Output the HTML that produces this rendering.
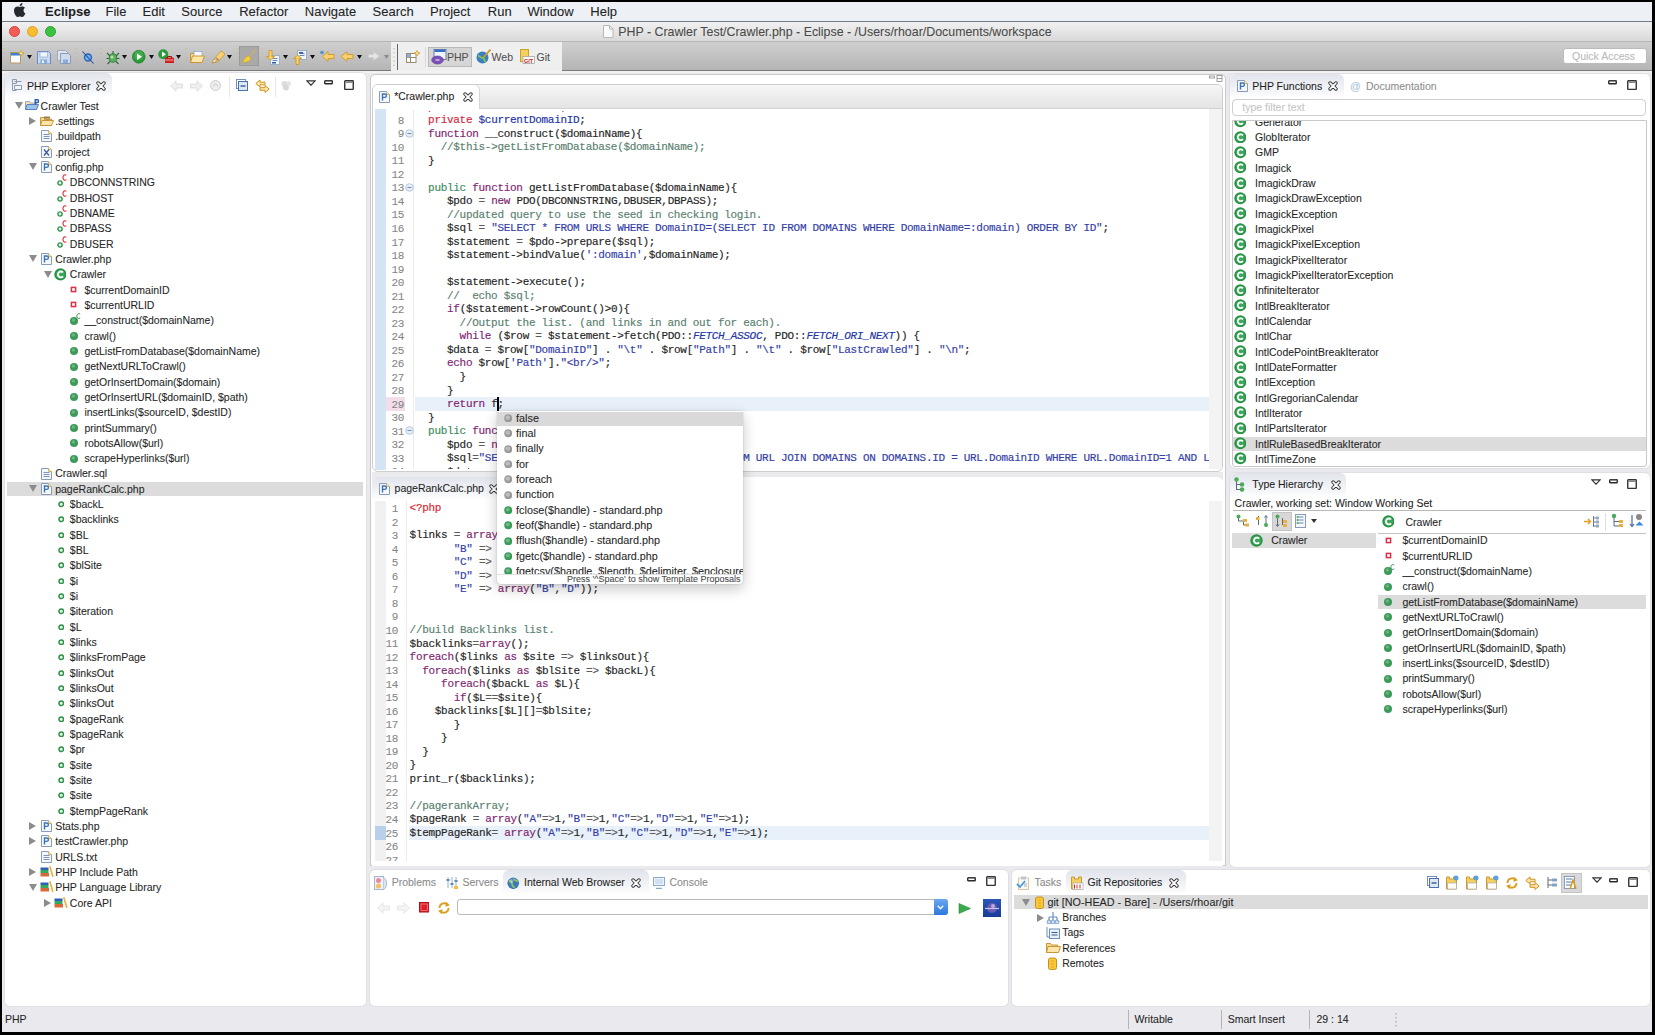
<!DOCTYPE html><html><head><meta charset="utf-8"><style>
html,body{margin:0;padding:0}
body{width:1655px;height:1035px;overflow:hidden;background:#000;position:relative}
div,span,svg{position:absolute;box-sizing:border-box}
.t{white-space:pre;line-height:1}
.t span{position:static}
.t{-webkit-text-stroke:0.08px currentColor}
.c,.c span{-webkit-text-stroke:0.16px currentColor}
</style></head><body>
<div style="left:2px;top:2px;width:1650px;height:19px;background:#edf1f6"></div>
<div style="left:2px;top:21px;width:1650px;height:1px;background:#6f7c88"></div>
<div style="left:2px;top:22px;width:1650px;height:1010px;background:#eaeaee"></div>
<div style="left:2px;top:22px;width:1650px;height:19px;background:linear-gradient(#f1f1f1,#d9d9d9);border-radius:4px 4px 0 0"></div>
<div style="left:2px;top:41px;width:1650px;height:1px;background:#b4b8b8"></div>
<div style="left:2px;top:42px;width:1650px;height:28px;background:linear-gradient(#cfcfcf,#b5b5b5)"></div>
<div style="left:2px;top:70px;width:1650px;height:1px;background:#7a7a7a"></div>
<div style="left:391px;top:42px;width:171px;height:29px;background:#efefef"></div>
<div style="left:2px;top:71px;width:1650px;height:2px;background:#f2f2f2"></div>
<svg style="position:absolute;left:13.5px;top:3px" width="13" height="14" viewBox="0 0 13 14"><g transform="translate(-1.3 0) scale(0.5833)"><path d="M12.152 6.896c-.948 0-2.415-1.078-3.96-1.04-2.04.027-3.91 1.183-4.961 3.014-2.117 3.675-.546 9.103 1.519 12.09 1.013 1.454 2.208 3.09 3.792 3.039 1.52-.065 2.090-.987 3.935-.987 1.831 0 2.350.987 3.960.948 1.637-.026 2.676-1.480 3.676-2.948 1.156-1.688 1.636-3.325 1.662-3.415-.039-.013-3.182-1.221-3.220-4.857-.026-3.040 2.480-4.494 2.597-4.559-1.429-2.090-3.623-2.324-4.390-2.376-2-.156-3.675 1.090-4.610 1.090zM15.530 3.830c.843-1.012 1.400-2.427 1.245-3.830-1.207.052-2.662.805-3.532 1.818-.780.896-1.454 2.338-1.273 3.714 1.338.104 2.715-.688 3.559-1.701" fill="#262a30"/></g></svg>
<span class="t" style="left:45px;top:4.75px;font-size:13px;font-family:'Liberation Sans',sans-serif;color:#1e1e1e;font-weight:bold">Eclipse</span>
<span class="t" style="left:105.5px;top:4.75px;font-size:13px;font-family:'Liberation Sans',sans-serif;color:#242424;">File</span>
<span class="t" style="left:142.5px;top:4.75px;font-size:13px;font-family:'Liberation Sans',sans-serif;color:#242424;">Edit</span>
<span class="t" style="left:181.3px;top:4.75px;font-size:13px;font-family:'Liberation Sans',sans-serif;color:#242424;">Source</span>
<span class="t" style="left:239.2px;top:4.75px;font-size:13px;font-family:'Liberation Sans',sans-serif;color:#242424;">Refactor</span>
<span class="t" style="left:304.8px;top:4.75px;font-size:13px;font-family:'Liberation Sans',sans-serif;color:#242424;">Navigate</span>
<span class="t" style="left:372.6px;top:4.75px;font-size:13px;font-family:'Liberation Sans',sans-serif;color:#242424;">Search</span>
<span class="t" style="left:430px;top:4.75px;font-size:13px;font-family:'Liberation Sans',sans-serif;color:#242424;">Project</span>
<span class="t" style="left:487.8px;top:4.75px;font-size:13px;font-family:'Liberation Sans',sans-serif;color:#242424;">Run</span>
<span class="t" style="left:527.4px;top:4.75px;font-size:13px;font-family:'Liberation Sans',sans-serif;color:#242424;">Window</span>
<span class="t" style="left:590.3px;top:4.75px;font-size:13px;font-family:'Liberation Sans',sans-serif;color:#242424;">Help</span>
<div style="left:8.9px;top:25.9px;width:11.2px;height:11.2px;border-radius:50%;background:#f25c54;border:0.5px solid #dd463f"></div>
<div style="left:26.9px;top:25.9px;width:11.2px;height:11.2px;border-radius:50%;background:#f7bd2f;border:0.5px solid #dea126"></div>
<div style="left:44.9px;top:25.9px;width:11.2px;height:11.2px;border-radius:50%;background:#3cc23e;border:0.5px solid #2ea432"></div>
<svg style="position:absolute;left:602px;top:25px" width="12" height="13" viewBox="0 0 12 13"><path d="M1.5 .5h6l3.5 3.5v8.5h-9.5z" fill="#fafafa" stroke="#b8b8b8"/><path d="M7.5 .5v3.5h3.5" fill="none" stroke="#b8b8b8"/></svg>
<span class="t" style="left:618.2px;top:26.36px;font-size:12.4px;font-family:'Liberation Sans',sans-serif;color:#4a4a4a;">PHP - Crawler Test/Crawler.php - Eclipse - /Users/rhoar/Documents/workspace</span>
<div style="left:1563px;top:48px;width:84px;height:16px;background:#fff;border:1px solid #bcbcbc;border-radius:3px"></div>
<span class="t" style="left:1572px;top:51.08px;font-size:10.5px;font-family:'Liberation Sans',sans-serif;color:#b9b9b9;">Quick Access</span>
<div style="left:5px;top:72.5px;width:361px;height:933.5px;background:#fff;border-radius:5px;box-shadow:0 0 0 1px #e0e0e4"></div>
<div style="left:5px;top:72.5px;width:107px;height:24px;background:linear-gradient(#e1e4ec,#f7f8fa 80%,#fff);border-radius:6px 6px 0 0"></div>
<div style="left:369.5px;top:74px;width:856px;height:792px;background:#fff;border:1px solid #c9c9c9;border-radius:5px 5px 0 0"></div>
<div style="left:1230px;top:73.5px;width:420px;height:394.5px;background:#fff;border-radius:5px;box-shadow:0 0 0 1px #e0e0e4"></div>
<div style="left:1230px;top:73.5px;width:113.5px;height:24px;background:linear-gradient(#e1e4ec,#f7f8fa 80%,#fff);border-radius:6px 6px 0 0"></div>
<div style="left:1230px;top:472.5px;width:420px;height:394px;background:#fff;border-radius:5px;box-shadow:0 0 0 1px #e0e0e4"></div>
<div style="left:1230px;top:472.5px;width:116px;height:24px;background:linear-gradient(#e1e4ec,#f7f8fa 80%,#fff);border-radius:6px 6px 0 0"></div>
<div style="left:370px;top:870px;width:637.5px;height:136px;background:#fff;border-radius:5px;box-shadow:0 0 0 1px #e0e0e4"></div>
<div style="left:1012px;top:870px;width:638px;height:136px;background:#fff;border-radius:5px;box-shadow:0 0 0 1px #e0e0e4"></div>
<svg style="position:absolute;left:12px;top:79px" width="10" height="13" viewBox="0 0 10 13"><path d="M.5 .5h4v4h-4zM.5 4.5v7h4M2.5 6.5h7v4h-7zM2.5 2.5h7" fill="none" stroke="#8a9ab0" stroke-width="1"/></svg>
<span class="t" style="left:27px;top:80.88px;font-size:10.5px;font-family:'Liberation Sans',sans-serif;color:#222;">PHP Explorer</span>
<svg style="position:absolute;left:96px;top:80.5px" width="10" height="10" viewBox="0 0 10 10"><path d="M2.1 2.1L7.9 7.9M7.9 2.1L2.1 7.9" stroke="#333" stroke-width="3.5" stroke-linecap="round"/><path d="M2.1 2.1L7.9 7.9M7.9 2.1L2.1 7.9" stroke="#fff" stroke-width="1.7" stroke-linecap="round"/></svg>
<svg style="position:absolute;left:170px;top:80px" width="13" height="12" viewBox="0 0 13 12"><path d="M.5 6L6 .8V4h6.5v4H6v3.2z" fill="#ececec" stroke="#d0d0d0" stroke-width=".8" opacity=".8"/></svg>
<svg style="position:absolute;left:190px;top:80px" width="13" height="12" viewBox="0 0 13 12"><path d="M12.5 6L7 .8V4H.5v4H7v3.2z" fill="#ececec" stroke="#d0d0d0" stroke-width=".8" opacity=".8"/></svg>
<svg style="position:absolute;left:209px;top:79px" width="13" height="13" viewBox="0 0 13 13"><circle cx="6.5" cy="6.5" r="5" fill="#eee" stroke="#d0d0d0"/><path d="M4 7.5l2.5-3 2.5 3" fill="none" stroke="#c8c8c8"/></svg>
<div style="left:229px;top:77px;width:1px;height:20px;background:#e6e6e6"></div>
<svg style="position:absolute;left:236px;top:79px" width="12" height="12" viewBox="0 0 12 12"><rect x=".5" y=".5" width="9" height="9" fill="#fff" stroke="#7890b8"/><rect x="2.5" y="2.5" width="9" height="9" fill="#dde8f5" stroke="#4a70b0"/><path d="M4.5 7h5" stroke="#2a4f90" stroke-width="1.3"/></svg>
<svg style="position:absolute;left:254.5px;top:78.5px" width="15" height="14" viewBox="0 0 15 14"><path d="M.8 4.5L5 1v2.2h5v2.6H5V8z" fill="#fde9a8" stroke="#d09020" stroke-width="1"/><path d="M14.2 10L10 6.5v2.2H5v2.6h5v2.2z" fill="#fde9a8" stroke="#d09020" stroke-width="1"/></svg>
<div style="left:275px;top:77px;width:1px;height:20px;background:#e6e6e6"></div>
<svg style="position:absolute;left:281px;top:80px" width="11" height="11" viewBox="0 0 11 11"><circle cx="3.5" cy="4" r="3" fill="#ddd"/><circle cx="7.5" cy="3.5" r="2.5" fill="#e4e4e4"/><circle cx="5" cy="7.5" r="3" fill="#d8d8d8"/></svg>
<svg style="position:absolute;left:306.3px;top:80px" width="10" height="6" viewBox="0 0 10 6"><path d="M.8 .8H9.2L5 5.2z" fill="#fff" stroke="#333" stroke-width="1.2"/></svg>
<svg style="position:absolute;left:324px;top:80px" width="9" height="5" viewBox="0 0 9 5"><rect x=".75" y=".75" width="7.5" height="3" rx=".5" fill="#fff" stroke="#2a2a2a" stroke-width="1.4"/><path d="M1.4 1.2h6.2" stroke="#888" stroke-width=".8"/></svg>
<svg style="position:absolute;left:343.5px;top:79.5px" width="10" height="10.5" viewBox="0 0 10 10.5"><rect x=".75" y=".75" width="8.5" height="8.7" rx=".6" fill="#fff" stroke="#333" stroke-width="1.4"/><rect x="1.4" y="1.4" width="7.2" height="1.6" fill="#8a8a8a"/></svg>
<svg style="position:absolute;left:14.5px;top:102.1px" width="8" height="7" viewBox="0 0 8 7"><path d="M0 0H8L4 7z" fill="#8c8c8c"/></svg>
<svg style="position:absolute;left:25.0px;top:99.1px" width="14" height="11" viewBox="0 0 14 11"><path d="M.5 2.5h4l1 1.5h6v6.5H.5z" fill="#f9e3a6" stroke="#9aa8c8"/><path d="M2 5.5h11.5l-2 5H.5z" fill="#9cc3ea" stroke="#5a7fc0"/><path d="M10.2 5.5V.7h2a1.4 1.4 0 010 2.8h-2" fill="none" stroke="#2a5fb0" stroke-width="1.4"/></svg>
<span class="t" style="left:40.6px;top:100.67px;font-size:10.5px;font-family:'Liberation Sans',sans-serif;color:#262626;">Crawler Test</span>
<svg style="position:absolute;left:29.400000000000002px;top:116.925px" width="7" height="8" viewBox="0 0 7 8"><path d="M0 0L7 4L0 8z" fill="#8c8c8c"/></svg>
<svg style="position:absolute;left:40.1px;top:114.925px" width="14" height="11" viewBox="0 0 14 11"><path d="M.5 2.5h4l1 1.5h6v6.5H.5z" fill="#f6d88a" stroke="#c8963a"/><path d="M2 5.5h11.5l-2 5H.5z" fill="#fde6a8" stroke="#c8963a"/><path d="M5 1v4M7 1v4M9 1v4M4 2.5h6" stroke="#8a6a30" stroke-width=".8"/></svg>
<span class="t" style="left:55.2px;top:116.00px;font-size:10.5px;font-family:'Liberation Sans',sans-serif;color:#262626;">.settings</span>
<svg style="position:absolute;left:41.1px;top:130.35px" width="11" height="12" viewBox="0 0 11 12"><path d="M.5 .5H7.5L10.5 3.5V11.5H.5z" fill="#f4f7fb" stroke="#8a9bb5"/><path d="M7.5 .5V3.5H10.5" fill="#fff4d0" stroke="#d9b45a"/><path d="M2.5 4.5h6M2.5 6.5h6M2.5 8.5h6" stroke="#7d93c0" stroke-width="1"/></svg>
<span class="t" style="left:55.2px;top:131.32px;font-size:10.5px;font-family:'Liberation Sans',sans-serif;color:#262626;">.buildpath</span>
<svg style="position:absolute;left:41.1px;top:145.67499999999998px" width="11" height="12" viewBox="0 0 11 12"><path d="M.5 .5H7.5L10.5 3.5V11.5H.5z" fill="#f4f7fb" stroke="#8a9bb5"/><path d="M7.5 .5V3.5H10.5" fill="#fff4d0" stroke="#d9b45a"/><path d="M3 3.5L8 9.5M8 3.5L3 9.5" stroke="#3a5a9a" stroke-width="1.3"/></svg>
<span class="t" style="left:55.2px;top:146.65px;font-size:10.5px;font-family:'Liberation Sans',sans-serif;color:#262626;">.project</span>
<svg style="position:absolute;left:29.1px;top:163.39999999999998px" width="8" height="7" viewBox="0 0 8 7"><path d="M0 0H8L4 7z" fill="#8c8c8c"/></svg>
<svg style="position:absolute;left:41.1px;top:160.99999999999997px" width="11" height="12" viewBox="0 0 11 12"><path d="M.5 .5H7.5L10.5 3.5V11.5H.5z" fill="#f4f7fb" stroke="#8a9bb5"/><path d="M7.5 .5V3.5H10.5" fill="#fff4d0" stroke="#d9b45a"/><path d="M3.5 9.5V3h2.2a1.7 1.7 0 010 3.4H3.5" fill="none" stroke="#3a72b8" stroke-width="1.4"/></svg>
<span class="t" style="left:55.2px;top:161.97px;font-size:10.5px;font-family:'Liberation Sans',sans-serif;color:#262626;">config.php</span>
<svg style="position:absolute;left:57.2px;top:180.225px" width="6" height="6" viewBox="0 0 6 6"><circle cx="3" cy="3" r="2.1" fill="#e8f5ea" stroke="#2f9248" stroke-width="1.4"/></svg>
<svg style="position:absolute;left:62.2px;top:174.225px" width="5" height="7" viewBox="0 0 5 7"><path d="M4.3 1.3A2 2.8 0 1 0 4.3 5.7" fill="none" stroke="#e0303a" stroke-width="1.1"/></svg>
<span class="t" style="left:69.8px;top:177.30px;font-size:10.5px;font-family:'Liberation Sans',sans-serif;color:#262626;">DBCONNSTRING</span>
<svg style="position:absolute;left:57.2px;top:195.54999999999998px" width="6" height="6" viewBox="0 0 6 6"><circle cx="3" cy="3" r="2.1" fill="#e8f5ea" stroke="#2f9248" stroke-width="1.4"/></svg>
<svg style="position:absolute;left:62.2px;top:189.54999999999998px" width="5" height="7" viewBox="0 0 5 7"><path d="M4.3 1.3A2 2.8 0 1 0 4.3 5.7" fill="none" stroke="#e0303a" stroke-width="1.1"/></svg>
<span class="t" style="left:69.8px;top:192.62px;font-size:10.5px;font-family:'Liberation Sans',sans-serif;color:#262626;">DBHOST</span>
<svg style="position:absolute;left:57.2px;top:210.875px" width="6" height="6" viewBox="0 0 6 6"><circle cx="3" cy="3" r="2.1" fill="#e8f5ea" stroke="#2f9248" stroke-width="1.4"/></svg>
<svg style="position:absolute;left:62.2px;top:204.875px" width="5" height="7" viewBox="0 0 5 7"><path d="M4.3 1.3A2 2.8 0 1 0 4.3 5.7" fill="none" stroke="#e0303a" stroke-width="1.1"/></svg>
<span class="t" style="left:69.8px;top:207.95px;font-size:10.5px;font-family:'Liberation Sans',sans-serif;color:#262626;">DBNAME</span>
<svg style="position:absolute;left:57.2px;top:226.2px" width="6" height="6" viewBox="0 0 6 6"><circle cx="3" cy="3" r="2.1" fill="#e8f5ea" stroke="#2f9248" stroke-width="1.4"/></svg>
<svg style="position:absolute;left:62.2px;top:220.2px" width="5" height="7" viewBox="0 0 5 7"><path d="M4.3 1.3A2 2.8 0 1 0 4.3 5.7" fill="none" stroke="#e0303a" stroke-width="1.1"/></svg>
<span class="t" style="left:69.8px;top:223.27px;font-size:10.5px;font-family:'Liberation Sans',sans-serif;color:#262626;">DBPASS</span>
<svg style="position:absolute;left:57.2px;top:241.52499999999998px" width="6" height="6" viewBox="0 0 6 6"><circle cx="3" cy="3" r="2.1" fill="#e8f5ea" stroke="#2f9248" stroke-width="1.4"/></svg>
<svg style="position:absolute;left:62.2px;top:235.52499999999998px" width="5" height="7" viewBox="0 0 5 7"><path d="M4.3 1.3A2 2.8 0 1 0 4.3 5.7" fill="none" stroke="#e0303a" stroke-width="1.1"/></svg>
<span class="t" style="left:69.8px;top:238.60px;font-size:10.5px;font-family:'Liberation Sans',sans-serif;color:#262626;">DBUSER</span>
<svg style="position:absolute;left:29.1px;top:255.35000000000002px" width="8" height="7" viewBox="0 0 8 7"><path d="M0 0H8L4 7z" fill="#8c8c8c"/></svg>
<svg style="position:absolute;left:41.1px;top:252.95000000000002px" width="11" height="12" viewBox="0 0 11 12"><path d="M.5 .5H7.5L10.5 3.5V11.5H.5z" fill="#f4f7fb" stroke="#8a9bb5"/><path d="M7.5 .5V3.5H10.5" fill="#fff4d0" stroke="#d9b45a"/><path d="M3.5 9.5V3h2.2a1.7 1.7 0 010 3.4H3.5" fill="none" stroke="#3a72b8" stroke-width="1.4"/></svg>
<span class="t" style="left:55.2px;top:253.93px;font-size:10.5px;font-family:'Liberation Sans',sans-serif;color:#262626;">Crawler.php</span>
<svg style="position:absolute;left:43.7px;top:270.67499999999995px" width="8" height="7" viewBox="0 0 8 7"><path d="M0 0H8L4 7z" fill="#8c8c8c"/></svg>
<svg style="position:absolute;left:53.7px;top:268.275px" width="12.8" height="12.8" viewBox="0 0 12.8 12.8"><circle cx="6.4" cy="6.4" r="6.1000000000000005" fill="#2f9a4a"/><circle cx="6.4" cy="6.4" r="5.1000000000000005" fill="#3aa85a" stroke="#1f7a35" stroke-width=".5"/><path d="M9.0 4.5A2.9 2.9 0 1 0 9.0 8.3" fill="none" stroke="#fff" stroke-width="1.8"/></svg>
<span class="t" style="left:69.8px;top:269.25px;font-size:10.5px;font-family:'Liberation Sans',sans-serif;color:#262626;">Crawler</span>
<svg style="position:absolute;left:69.8px;top:286.0px" width="7" height="7" viewBox="0 0 7 7"><rect x="1.4" y="1.4" width="4.2" height="4.2" fill="#fff" stroke="#dc3048" stroke-width="1.5"/></svg>
<span class="t" style="left:84.4px;top:284.57px;font-size:10.5px;font-family:'Liberation Sans',sans-serif;color:#262626;">$currentDomainID</span>
<svg style="position:absolute;left:69.8px;top:301.325px" width="7" height="7" viewBox="0 0 7 7"><rect x="1.4" y="1.4" width="4.2" height="4.2" fill="#fff" stroke="#dc3048" stroke-width="1.5"/></svg>
<span class="t" style="left:84.4px;top:299.90px;font-size:10.5px;font-family:'Liberation Sans',sans-serif;color:#262626;">$currentURLID</span>
<svg style="position:absolute;left:69.8px;top:316.65px" width="8" height="8" viewBox="0 0 8 8"><circle cx="4.0" cy="4.0" r="4.0" fill="#3c9a58"/><circle cx="3.4" cy="3.0" r="1.8" fill="#7cc08e" opacity=".7"/></svg>
<svg style="position:absolute;left:75.8px;top:313.15px" width="5" height="6" viewBox="0 0 5 6"><path d="M4.2 1.2A2 2.5 0 1 0 4.2 4.8" fill="none" stroke="#3c9a58" stroke-width="1"/></svg>
<span class="t" style="left:84.4px;top:315.22px;font-size:10.5px;font-family:'Liberation Sans',sans-serif;color:#262626;">__construct($domainName)</span>
<svg style="position:absolute;left:69.8px;top:331.975px" width="8" height="8" viewBox="0 0 8 8"><circle cx="4.0" cy="4.0" r="4.0" fill="#3c9a58"/><circle cx="3.4" cy="3.0" r="1.8" fill="#7cc08e" opacity=".7"/></svg>
<span class="t" style="left:84.4px;top:330.55px;font-size:10.5px;font-family:'Liberation Sans',sans-serif;color:#262626;">crawl()</span>
<svg style="position:absolute;left:69.8px;top:347.29999999999995px" width="8" height="8" viewBox="0 0 8 8"><circle cx="4.0" cy="4.0" r="4.0" fill="#3c9a58"/><circle cx="3.4" cy="3.0" r="1.8" fill="#7cc08e" opacity=".7"/></svg>
<span class="t" style="left:84.4px;top:345.87px;font-size:10.5px;font-family:'Liberation Sans',sans-serif;color:#262626;">getListFromDatabase($domainName)</span>
<svg style="position:absolute;left:69.8px;top:362.625px" width="8" height="8" viewBox="0 0 8 8"><circle cx="4.0" cy="4.0" r="4.0" fill="#3c9a58"/><circle cx="3.4" cy="3.0" r="1.8" fill="#7cc08e" opacity=".7"/></svg>
<span class="t" style="left:84.4px;top:361.20px;font-size:10.5px;font-family:'Liberation Sans',sans-serif;color:#262626;">getNextURLToCrawl()</span>
<svg style="position:absolute;left:69.8px;top:377.94999999999993px" width="8" height="8" viewBox="0 0 8 8"><circle cx="4.0" cy="4.0" r="4.0" fill="#3c9a58"/><circle cx="3.4" cy="3.0" r="1.8" fill="#7cc08e" opacity=".7"/></svg>
<span class="t" style="left:84.4px;top:376.52px;font-size:10.5px;font-family:'Liberation Sans',sans-serif;color:#262626;">getOrInsertDomain($domain)</span>
<svg style="position:absolute;left:69.8px;top:393.275px" width="8" height="8" viewBox="0 0 8 8"><circle cx="4.0" cy="4.0" r="4.0" fill="#3c9a58"/><circle cx="3.4" cy="3.0" r="1.8" fill="#7cc08e" opacity=".7"/></svg>
<span class="t" style="left:84.4px;top:391.85px;font-size:10.5px;font-family:'Liberation Sans',sans-serif;color:#262626;">getOrInsertURL($domainID, $path)</span>
<svg style="position:absolute;left:69.8px;top:408.6px" width="8" height="8" viewBox="0 0 8 8"><circle cx="4.0" cy="4.0" r="4.0" fill="#3c9a58"/><circle cx="3.4" cy="3.0" r="1.8" fill="#7cc08e" opacity=".7"/></svg>
<span class="t" style="left:84.4px;top:407.18px;font-size:10.5px;font-family:'Liberation Sans',sans-serif;color:#262626;">insertLinks($sourceID, $destID)</span>
<svg style="position:absolute;left:69.8px;top:423.92499999999995px" width="8" height="8" viewBox="0 0 8 8"><circle cx="4.0" cy="4.0" r="4.0" fill="#3c9a58"/><circle cx="3.4" cy="3.0" r="1.8" fill="#7cc08e" opacity=".7"/></svg>
<span class="t" style="left:84.4px;top:422.50px;font-size:10.5px;font-family:'Liberation Sans',sans-serif;color:#262626;">printSummary()</span>
<svg style="position:absolute;left:69.8px;top:439.25px" width="8" height="8" viewBox="0 0 8 8"><circle cx="4.0" cy="4.0" r="4.0" fill="#3c9a58"/><circle cx="3.4" cy="3.0" r="1.8" fill="#7cc08e" opacity=".7"/></svg>
<span class="t" style="left:84.4px;top:437.82px;font-size:10.5px;font-family:'Liberation Sans',sans-serif;color:#262626;">robotsAllow($url)</span>
<svg style="position:absolute;left:69.8px;top:454.57499999999993px" width="8" height="8" viewBox="0 0 8 8"><circle cx="4.0" cy="4.0" r="4.0" fill="#3c9a58"/><circle cx="3.4" cy="3.0" r="1.8" fill="#7cc08e" opacity=".7"/></svg>
<span class="t" style="left:84.4px;top:453.15px;font-size:10.5px;font-family:'Liberation Sans',sans-serif;color:#262626;">scrapeHyperlinks($url)</span>
<svg style="position:absolute;left:41.1px;top:467.5px" width="11" height="12" viewBox="0 0 11 12"><path d="M.5 .5H7.5L10.5 3.5V11.5H.5z" fill="#f4f7fb" stroke="#8a9bb5"/><path d="M7.5 .5V3.5H10.5" fill="#fff4d0" stroke="#d9b45a"/><path d="M2.5 4.5h6M2.5 6.5h6M2.5 8.5h6" stroke="#7d93c0" stroke-width="1"/></svg>
<span class="t" style="left:55.2px;top:468.47px;font-size:10.5px;font-family:'Liberation Sans',sans-serif;color:#262626;">Crawler.sql</span>
<div style="left:7px;top:482.02500000000003px;width:356px;height:14.3px;background:#dcdcdc"></div>
<svg style="position:absolute;left:29.1px;top:485.225px" width="8" height="7" viewBox="0 0 8 7"><path d="M0 0H8L4 7z" fill="#8c8c8c"/></svg>
<svg style="position:absolute;left:41.1px;top:482.82500000000005px" width="11" height="12" viewBox="0 0 11 12"><path d="M.5 .5H7.5L10.5 3.5V11.5H.5z" fill="#f4f7fb" stroke="#8a9bb5"/><path d="M7.5 .5V3.5H10.5" fill="#fff4d0" stroke="#d9b45a"/><path d="M3.5 9.5V3h2.2a1.7 1.7 0 010 3.4H3.5" fill="none" stroke="#3a72b8" stroke-width="1.4"/></svg>
<span class="t" style="left:55.2px;top:483.80px;font-size:10.5px;font-family:'Liberation Sans',sans-serif;color:#262626;">pageRankCalc.php</span>
<svg style="position:absolute;left:57.5px;top:501.04999999999995px" width="6.5" height="6.5" viewBox="0 0 6.5 6.5"><circle cx="3.25" cy="3.25" r="2.3" fill="#e8f5ea" stroke="#2f9248" stroke-width="1.5"/></svg>
<span class="t" style="left:69.8px;top:499.12px;font-size:10.5px;font-family:'Liberation Sans',sans-serif;color:#262626;">$backL</span>
<svg style="position:absolute;left:57.5px;top:516.375px" width="6.5" height="6.5" viewBox="0 0 6.5 6.5"><circle cx="3.25" cy="3.25" r="2.3" fill="#e8f5ea" stroke="#2f9248" stroke-width="1.5"/></svg>
<span class="t" style="left:69.8px;top:514.45px;font-size:10.5px;font-family:'Liberation Sans',sans-serif;color:#262626;">$backlinks</span>
<svg style="position:absolute;left:57.5px;top:531.6999999999999px" width="6.5" height="6.5" viewBox="0 0 6.5 6.5"><circle cx="3.25" cy="3.25" r="2.3" fill="#e8f5ea" stroke="#2f9248" stroke-width="1.5"/></svg>
<span class="t" style="left:69.8px;top:529.77px;font-size:10.5px;font-family:'Liberation Sans',sans-serif;color:#262626;">$BL</span>
<svg style="position:absolute;left:57.5px;top:547.025px" width="6.5" height="6.5" viewBox="0 0 6.5 6.5"><circle cx="3.25" cy="3.25" r="2.3" fill="#e8f5ea" stroke="#2f9248" stroke-width="1.5"/></svg>
<span class="t" style="left:69.8px;top:545.10px;font-size:10.5px;font-family:'Liberation Sans',sans-serif;color:#262626;">$BL</span>
<svg style="position:absolute;left:57.5px;top:562.35px" width="6.5" height="6.5" viewBox="0 0 6.5 6.5"><circle cx="3.25" cy="3.25" r="2.3" fill="#e8f5ea" stroke="#2f9248" stroke-width="1.5"/></svg>
<span class="t" style="left:69.8px;top:560.43px;font-size:10.5px;font-family:'Liberation Sans',sans-serif;color:#262626;">$blSite</span>
<svg style="position:absolute;left:57.5px;top:577.675px" width="6.5" height="6.5" viewBox="0 0 6.5 6.5"><circle cx="3.25" cy="3.25" r="2.3" fill="#e8f5ea" stroke="#2f9248" stroke-width="1.5"/></svg>
<span class="t" style="left:69.8px;top:575.75px;font-size:10.5px;font-family:'Liberation Sans',sans-serif;color:#262626;">$i</span>
<svg style="position:absolute;left:57.5px;top:593.0px" width="6.5" height="6.5" viewBox="0 0 6.5 6.5"><circle cx="3.25" cy="3.25" r="2.3" fill="#e8f5ea" stroke="#2f9248" stroke-width="1.5"/></svg>
<span class="t" style="left:69.8px;top:591.08px;font-size:10.5px;font-family:'Liberation Sans',sans-serif;color:#262626;">$i</span>
<svg style="position:absolute;left:57.5px;top:608.3249999999999px" width="6.5" height="6.5" viewBox="0 0 6.5 6.5"><circle cx="3.25" cy="3.25" r="2.3" fill="#e8f5ea" stroke="#2f9248" stroke-width="1.5"/></svg>
<span class="t" style="left:69.8px;top:606.40px;font-size:10.5px;font-family:'Liberation Sans',sans-serif;color:#262626;">$iteration</span>
<svg style="position:absolute;left:57.5px;top:623.65px" width="6.5" height="6.5" viewBox="0 0 6.5 6.5"><circle cx="3.25" cy="3.25" r="2.3" fill="#e8f5ea" stroke="#2f9248" stroke-width="1.5"/></svg>
<span class="t" style="left:69.8px;top:621.73px;font-size:10.5px;font-family:'Liberation Sans',sans-serif;color:#262626;">$L</span>
<svg style="position:absolute;left:57.5px;top:638.975px" width="6.5" height="6.5" viewBox="0 0 6.5 6.5"><circle cx="3.25" cy="3.25" r="2.3" fill="#e8f5ea" stroke="#2f9248" stroke-width="1.5"/></svg>
<span class="t" style="left:69.8px;top:637.05px;font-size:10.5px;font-family:'Liberation Sans',sans-serif;color:#262626;">$links</span>
<svg style="position:absolute;left:57.5px;top:654.3px" width="6.5" height="6.5" viewBox="0 0 6.5 6.5"><circle cx="3.25" cy="3.25" r="2.3" fill="#e8f5ea" stroke="#2f9248" stroke-width="1.5"/></svg>
<span class="t" style="left:69.8px;top:652.38px;font-size:10.5px;font-family:'Liberation Sans',sans-serif;color:#262626;">$linksFromPage</span>
<svg style="position:absolute;left:57.5px;top:669.625px" width="6.5" height="6.5" viewBox="0 0 6.5 6.5"><circle cx="3.25" cy="3.25" r="2.3" fill="#e8f5ea" stroke="#2f9248" stroke-width="1.5"/></svg>
<span class="t" style="left:69.8px;top:667.70px;font-size:10.5px;font-family:'Liberation Sans',sans-serif;color:#262626;">$linksOut</span>
<svg style="position:absolute;left:57.5px;top:684.95px" width="6.5" height="6.5" viewBox="0 0 6.5 6.5"><circle cx="3.25" cy="3.25" r="2.3" fill="#e8f5ea" stroke="#2f9248" stroke-width="1.5"/></svg>
<span class="t" style="left:69.8px;top:683.03px;font-size:10.5px;font-family:'Liberation Sans',sans-serif;color:#262626;">$linksOut</span>
<svg style="position:absolute;left:57.5px;top:700.275px" width="6.5" height="6.5" viewBox="0 0 6.5 6.5"><circle cx="3.25" cy="3.25" r="2.3" fill="#e8f5ea" stroke="#2f9248" stroke-width="1.5"/></svg>
<span class="t" style="left:69.8px;top:698.35px;font-size:10.5px;font-family:'Liberation Sans',sans-serif;color:#262626;">$linksOut</span>
<svg style="position:absolute;left:57.5px;top:715.6px" width="6.5" height="6.5" viewBox="0 0 6.5 6.5"><circle cx="3.25" cy="3.25" r="2.3" fill="#e8f5ea" stroke="#2f9248" stroke-width="1.5"/></svg>
<span class="t" style="left:69.8px;top:713.68px;font-size:10.5px;font-family:'Liberation Sans',sans-serif;color:#262626;">$pageRank</span>
<svg style="position:absolute;left:57.5px;top:730.925px" width="6.5" height="6.5" viewBox="0 0 6.5 6.5"><circle cx="3.25" cy="3.25" r="2.3" fill="#e8f5ea" stroke="#2f9248" stroke-width="1.5"/></svg>
<span class="t" style="left:69.8px;top:729.00px;font-size:10.5px;font-family:'Liberation Sans',sans-serif;color:#262626;">$pageRank</span>
<svg style="position:absolute;left:57.5px;top:746.25px" width="6.5" height="6.5" viewBox="0 0 6.5 6.5"><circle cx="3.25" cy="3.25" r="2.3" fill="#e8f5ea" stroke="#2f9248" stroke-width="1.5"/></svg>
<span class="t" style="left:69.8px;top:744.33px;font-size:10.5px;font-family:'Liberation Sans',sans-serif;color:#262626;">$pr</span>
<svg style="position:absolute;left:57.5px;top:761.575px" width="6.5" height="6.5" viewBox="0 0 6.5 6.5"><circle cx="3.25" cy="3.25" r="2.3" fill="#e8f5ea" stroke="#2f9248" stroke-width="1.5"/></svg>
<span class="t" style="left:69.8px;top:759.65px;font-size:10.5px;font-family:'Liberation Sans',sans-serif;color:#262626;">$site</span>
<svg style="position:absolute;left:57.5px;top:776.9px" width="6.5" height="6.5" viewBox="0 0 6.5 6.5"><circle cx="3.25" cy="3.25" r="2.3" fill="#e8f5ea" stroke="#2f9248" stroke-width="1.5"/></svg>
<span class="t" style="left:69.8px;top:774.98px;font-size:10.5px;font-family:'Liberation Sans',sans-serif;color:#262626;">$site</span>
<svg style="position:absolute;left:57.5px;top:792.225px" width="6.5" height="6.5" viewBox="0 0 6.5 6.5"><circle cx="3.25" cy="3.25" r="2.3" fill="#e8f5ea" stroke="#2f9248" stroke-width="1.5"/></svg>
<span class="t" style="left:69.8px;top:790.30px;font-size:10.5px;font-family:'Liberation Sans',sans-serif;color:#262626;">$site</span>
<svg style="position:absolute;left:57.5px;top:807.55px" width="6.5" height="6.5" viewBox="0 0 6.5 6.5"><circle cx="3.25" cy="3.25" r="2.3" fill="#e8f5ea" stroke="#2f9248" stroke-width="1.5"/></svg>
<span class="t" style="left:69.8px;top:805.62px;font-size:10.5px;font-family:'Liberation Sans',sans-serif;color:#262626;">$tempPageRank</span>
<svg style="position:absolute;left:29.400000000000002px;top:821.875px" width="7" height="8" viewBox="0 0 7 8"><path d="M0 0L7 4L0 8z" fill="#8c8c8c"/></svg>
<svg style="position:absolute;left:41.1px;top:819.975px" width="11" height="12" viewBox="0 0 11 12"><path d="M.5 .5H7.5L10.5 3.5V11.5H.5z" fill="#f4f7fb" stroke="#8a9bb5"/><path d="M7.5 .5V3.5H10.5" fill="#fff4d0" stroke="#d9b45a"/><path d="M3.5 9.5V3h2.2a1.7 1.7 0 010 3.4H3.5" fill="none" stroke="#3a72b8" stroke-width="1.4"/></svg>
<span class="t" style="left:55.2px;top:820.95px;font-size:10.5px;font-family:'Liberation Sans',sans-serif;color:#262626;">Stats.php</span>
<svg style="position:absolute;left:29.400000000000002px;top:837.1999999999999px" width="7" height="8" viewBox="0 0 7 8"><path d="M0 0L7 4L0 8z" fill="#8c8c8c"/></svg>
<svg style="position:absolute;left:41.1px;top:835.3px" width="11" height="12" viewBox="0 0 11 12"><path d="M.5 .5H7.5L10.5 3.5V11.5H.5z" fill="#f4f7fb" stroke="#8a9bb5"/><path d="M7.5 .5V3.5H10.5" fill="#fff4d0" stroke="#d9b45a"/><path d="M3.5 9.5V3h2.2a1.7 1.7 0 010 3.4H3.5" fill="none" stroke="#3a72b8" stroke-width="1.4"/></svg>
<span class="t" style="left:55.2px;top:836.27px;font-size:10.5px;font-family:'Liberation Sans',sans-serif;color:#262626;">testCrawler.php</span>
<svg style="position:absolute;left:41.1px;top:850.625px" width="11" height="12" viewBox="0 0 11 12"><path d="M.5 .5H7.5L10.5 3.5V11.5H.5z" fill="#f4f7fb" stroke="#8a9bb5"/><path d="M7.5 .5V3.5H10.5" fill="#fff4d0" stroke="#d9b45a"/><path d="M2.5 4.5h6M2.5 6.5h6M2.5 8.5h6" stroke="#7d93c0" stroke-width="1"/></svg>
<span class="t" style="left:55.2px;top:851.60px;font-size:10.5px;font-family:'Liberation Sans',sans-serif;color:#262626;">URLS.txt</span>
<svg style="position:absolute;left:29.400000000000002px;top:867.85px" width="7" height="8" viewBox="0 0 7 8"><path d="M0 0L7 4L0 8z" fill="#8c8c8c"/></svg>
<svg style="position:absolute;left:39.6px;top:865.85px" width="14" height="11" viewBox="0 0 14 11"><rect x=".5" y="1.5" width="8" height="2.5" fill="#2d5fb5"/><rect x=".5" y="4" width="8" height="3" fill="#35a860"/><rect x=".5" y="7" width="8.5" height="3.5" fill="#d86a3a"/><path d="M9 .5l1.5-.5 3.3 10.5-1.7.5z" fill="#f0b040"/></svg>
<span class="t" style="left:55.2px;top:866.93px;font-size:10.5px;font-family:'Liberation Sans',sans-serif;color:#262626;">PHP Include Path</span>
<svg style="position:absolute;left:29.1px;top:883.675px" width="8" height="7" viewBox="0 0 8 7"><path d="M0 0H8L4 7z" fill="#8c8c8c"/></svg>
<svg style="position:absolute;left:39.6px;top:881.175px" width="14" height="11" viewBox="0 0 14 11"><rect x=".5" y="1.5" width="8" height="2.5" fill="#2d5fb5"/><rect x=".5" y="4" width="8" height="3" fill="#35a860"/><rect x=".5" y="7" width="8.5" height="3.5" fill="#d86a3a"/><path d="M9 .5l1.5-.5 3.3 10.5-1.7.5z" fill="#f0b040"/></svg>
<span class="t" style="left:55.2px;top:882.25px;font-size:10.5px;font-family:'Liberation Sans',sans-serif;color:#262626;">PHP Language Library</span>
<svg style="position:absolute;left:44.0px;top:898.5px" width="7" height="8" viewBox="0 0 7 8"><path d="M0 0L7 4L0 8z" fill="#8c8c8c"/></svg>
<svg style="position:absolute;left:54.2px;top:896.5px" width="14" height="11" viewBox="0 0 14 11"><rect x=".5" y="1.5" width="8" height="2.5" fill="#2d5fb5"/><rect x=".5" y="4" width="8" height="3" fill="#35a860"/><rect x=".5" y="7" width="8.5" height="3.5" fill="#d86a3a"/><path d="M9 .5l1.5-.5 3.3 10.5-1.7.5z" fill="#f0b040"/></svg>
<span class="t" style="left:69.8px;top:897.58px;font-size:10.5px;font-family:'Liberation Sans',sans-serif;color:#262626;">Core API</span>
<span class="t" style="left:5px;top:1014.28px;font-size:10.5px;font-family:'Liberation Sans',sans-serif;color:#262626;">PHP</span>
<svg style="position:absolute;left:1209px;top:75px" width="14" height="7" viewBox="0 0 14 7"><rect x=".5" y="1" width="5" height="2" fill="#fff" stroke="#888" stroke-width=".8"/><rect x="8" y=".5" width="5" height="6" fill="#fff" stroke="#888" stroke-width=".8"/><path d="M8 3.5h5" stroke="#888" stroke-width=".8"/></svg>
<div style="left:372px;top:84px;width:851px;height:387.5px;background:#fff;border:1px solid #cdcdcd;border-radius:6px 6px 6px 6px"></div>
<div style="left:373px;top:85px;width:849px;height:23px;background:linear-gradient(#f6f6f6,#e4e4e4);border-radius:5px 5px 0 0"></div>
<div style="left:479px;top:107.5px;width:743px;height:1px;background:#d4d4d8"></div>
<div style="left:373px;top:85px;width:106px;height:23px;background:#fff;border-radius:5px 5px 0 0;box-shadow:1px 0 0 #d6d6d6"></div>
<svg style="position:absolute;left:379px;top:91px" width="11" height="12" viewBox="0 0 11 12"><path d="M.5 .5H7.5L10.5 3.5V11.5H.5z" fill="#f4f7fb" stroke="#8a9bb5"/><path d="M7.5 .5V3.5H10.5" fill="#fff4d0" stroke="#d9b45a"/><path d="M3.5 9.5V3h2.2a1.7 1.7 0 010 3.4H3.5" fill="none" stroke="#3a72b8" stroke-width="1.4"/></svg>
<span class="t" style="left:394.2px;top:91.48px;font-size:10.5px;font-family:'Liberation Sans',sans-serif;color:#1e1e1e;">*Crawler.php</span>
<svg style="position:absolute;left:463px;top:91.5px" width="10" height="10" viewBox="0 0 10 10"><path d="M2.1 2.1L7.9 7.9M7.9 2.1L2.1 7.9" stroke="#333" stroke-width="3.5" stroke-linecap="round"/><path d="M2.1 2.1L7.9 7.9M7.9 2.1L2.1 7.9" stroke="#fff" stroke-width="1.7" stroke-linecap="round"/></svg>
<div style="left:375px;top:109px;width:11px;height:360.5px;background:#d4e4f4"></div>
<div style="left:413px;top:110px;width:1px;height:359px;background:#ececec"></div>
<div style="left:1209px;top:109px;width:13px;height:359.5px;background:#f3f3f3"></div>
<div style="left:372px;top:471.5px;width:851px;height:8px;background:#ebebee"></div>
<div style="left:372px;top:477px;width:851px;height:389px;background:#fff;border-radius:6px 6px 0 0"></div>
<div style="left:372px;top:477px;width:134px;height:23px;background:linear-gradient(#e1e4ec,#f7f8fa 80%,#fff);border-radius:6px 6px 0 0"></div>
<svg style="position:absolute;left:379px;top:483px" width="11" height="12" viewBox="0 0 11 12"><path d="M.5 .5H7.5L10.5 3.5V11.5H.5z" fill="#f4f7fb" stroke="#8a9bb5"/><path d="M7.5 .5V3.5H10.5" fill="#fff4d0" stroke="#d9b45a"/><path d="M3.5 9.5V3h2.2a1.7 1.7 0 010 3.4H3.5" fill="none" stroke="#3a72b8" stroke-width="1.4"/></svg>
<span class="t" style="left:394.6px;top:482.88px;font-size:10.5px;font-family:'Liberation Sans',sans-serif;color:#1e1e1e;">pageRankCalc.php</span>
<svg style="position:absolute;left:489px;top:483.5px" width="10" height="10" viewBox="0 0 10 10"><path d="M2.1 2.1L7.9 7.9M7.9 2.1L2.1 7.9" stroke="#333" stroke-width="3.5" stroke-linecap="round"/><path d="M2.1 2.1L7.9 7.9M7.9 2.1L2.1 7.9" stroke="#fff" stroke-width="1.7" stroke-linecap="round"/></svg>
<div style="left:375px;top:501px;width:11px;height:360px;background:#f1f1f1"></div>
<div style="left:406px;top:501px;width:1px;height:360px;background:#ececec"></div>
<div style="left:1209px;top:501px;width:13px;height:360px;background:#f3f3f3"></div>
<div style="left:415px;top:397.02000000000004px;width:794px;height:14px;background:#e8f0fa"></div>
<div style="left:386px;top:397.02000000000004px;width:18.5px;height:14px;background:#f2dde8"></div>
<div style="left:386px;top:110.8px;width:22px;height:358.7px;overflow:hidden">
<span class="t" style="left:11.70px;top:-8.48px;font-family:'Liberation Mono',monospace;font-size:11px;letter-spacing:-0.3px;color:#858585">7</span>
<span class="t" style="left:11.70px;top:5.04px;font-family:'Liberation Mono',monospace;font-size:11px;letter-spacing:-0.3px;color:#858585">8</span>
<span class="t" style="left:11.70px;top:18.56px;font-family:'Liberation Mono',monospace;font-size:11px;letter-spacing:-0.3px;color:#858585">9</span>
<span class="t" style="left:5.40px;top:32.08px;font-family:'Liberation Mono',monospace;font-size:11px;letter-spacing:-0.3px;color:#858585">10</span>
<span class="t" style="left:5.40px;top:45.60px;font-family:'Liberation Mono',monospace;font-size:11px;letter-spacing:-0.3px;color:#858585">11</span>
<span class="t" style="left:5.40px;top:59.12px;font-family:'Liberation Mono',monospace;font-size:11px;letter-spacing:-0.3px;color:#858585">12</span>
<span class="t" style="left:5.40px;top:72.64px;font-family:'Liberation Mono',monospace;font-size:11px;letter-spacing:-0.3px;color:#858585">13</span>
<span class="t" style="left:5.40px;top:86.16px;font-family:'Liberation Mono',monospace;font-size:11px;letter-spacing:-0.3px;color:#858585">14</span>
<span class="t" style="left:5.40px;top:99.68px;font-family:'Liberation Mono',monospace;font-size:11px;letter-spacing:-0.3px;color:#858585">15</span>
<span class="t" style="left:5.40px;top:113.20px;font-family:'Liberation Mono',monospace;font-size:11px;letter-spacing:-0.3px;color:#858585">16</span>
<span class="t" style="left:5.40px;top:126.72px;font-family:'Liberation Mono',monospace;font-size:11px;letter-spacing:-0.3px;color:#858585">17</span>
<span class="t" style="left:5.40px;top:140.24px;font-family:'Liberation Mono',monospace;font-size:11px;letter-spacing:-0.3px;color:#858585">18</span>
<span class="t" style="left:5.40px;top:153.76px;font-family:'Liberation Mono',monospace;font-size:11px;letter-spacing:-0.3px;color:#858585">19</span>
<span class="t" style="left:5.40px;top:167.28px;font-family:'Liberation Mono',monospace;font-size:11px;letter-spacing:-0.3px;color:#858585">20</span>
<span class="t" style="left:5.40px;top:180.80px;font-family:'Liberation Mono',monospace;font-size:11px;letter-spacing:-0.3px;color:#858585">21</span>
<span class="t" style="left:5.40px;top:194.32px;font-family:'Liberation Mono',monospace;font-size:11px;letter-spacing:-0.3px;color:#858585">22</span>
<span class="t" style="left:5.40px;top:207.84px;font-family:'Liberation Mono',monospace;font-size:11px;letter-spacing:-0.3px;color:#858585">23</span>
<span class="t" style="left:5.40px;top:221.36px;font-family:'Liberation Mono',monospace;font-size:11px;letter-spacing:-0.3px;color:#858585">24</span>
<span class="t" style="left:5.40px;top:234.88px;font-family:'Liberation Mono',monospace;font-size:11px;letter-spacing:-0.3px;color:#858585">25</span>
<span class="t" style="left:5.40px;top:248.40px;font-family:'Liberation Mono',monospace;font-size:11px;letter-spacing:-0.3px;color:#858585">26</span>
<span class="t" style="left:5.40px;top:261.92px;font-family:'Liberation Mono',monospace;font-size:11px;letter-spacing:-0.3px;color:#858585">27</span>
<span class="t" style="left:5.40px;top:275.44px;font-family:'Liberation Mono',monospace;font-size:11px;letter-spacing:-0.3px;color:#858585">28</span>
<span class="t" style="left:5.40px;top:288.96px;font-family:'Liberation Mono',monospace;font-size:11px;letter-spacing:-0.3px;color:#858585">29</span>
<span class="t" style="left:5.40px;top:302.48px;font-family:'Liberation Mono',monospace;font-size:11px;letter-spacing:-0.3px;color:#858585">30</span>
<span class="t" style="left:5.40px;top:316.00px;font-family:'Liberation Mono',monospace;font-size:11px;letter-spacing:-0.3px;color:#858585">31</span>
<span class="t" style="left:5.40px;top:329.52px;font-family:'Liberation Mono',monospace;font-size:11px;letter-spacing:-0.3px;color:#858585">32</span>
<span class="t" style="left:5.40px;top:343.04px;font-family:'Liberation Mono',monospace;font-size:11px;letter-spacing:-0.3px;color:#858585">33</span>
<span class="t" style="left:5.40px;top:356.56px;font-family:'Liberation Mono',monospace;font-size:11px;letter-spacing:-0.3px;color:#858585">34</span>
</div>
<div style="left:414.5px;top:110.8px;width:794.5px;height:358.7px;overflow:hidden">
<span class="t c" style="left:1.0px;top:-9.18px;font-family:'Liberation Mono',monospace;font-size:11px;letter-spacing:-0.3px">  <span style="color:#d8243c;">private</span> <span style="color:#2234a8;">$currentURLID</span><span style="color:#262626;">;</span></span>
<span class="t c" style="left:1.0px;top:4.34px;font-family:'Liberation Mono',monospace;font-size:11px;letter-spacing:-0.3px">  <span style="color:#d8243c;">private</span> <span style="color:#2234a8;">$currentDomainID</span><span style="color:#262626;">;</span></span>
<span class="t c" style="left:1.0px;top:17.86px;font-family:'Liberation Mono',monospace;font-size:11px;letter-spacing:-0.3px">  <span style="color:#7f1f6f;">function</span> <span style="color:#262626;">__construct</span><span style="color:#262626;">(</span><span style="color:#262626;">$domainName</span><span style="color:#262626;">)</span><span style="color:#262626;">{</span></span>
<span class="t c" style="left:1.0px;top:31.38px;font-family:'Liberation Mono',monospace;font-size:11px;letter-spacing:-0.3px">    <span style="color:#5a7f70;">//$this-&gt;getListFromDatabase($domainName);</span></span>
<span class="t c" style="left:1.0px;top:44.90px;font-family:'Liberation Mono',monospace;font-size:11px;letter-spacing:-0.3px">  <span style="color:#262626;">}</span></span>
<span class="t c" style="left:1.0px;top:58.42px;font-family:'Liberation Mono',monospace;font-size:11px;letter-spacing:-0.3px"></span>
<span class="t c" style="left:1.0px;top:71.94px;font-family:'Liberation Mono',monospace;font-size:11px;letter-spacing:-0.3px">  <span style="color:#3d8a5c;">public</span> <span style="color:#7f1f6f;">function</span> <span style="color:#262626;">getListFromDatabase</span><span style="color:#262626;">(</span><span style="color:#262626;">$domainName</span><span style="color:#262626;">)</span><span style="color:#262626;">{</span></span>
<span class="t c" style="left:1.0px;top:85.46px;font-family:'Liberation Mono',monospace;font-size:11px;letter-spacing:-0.3px">     <span style="color:#262626;">$pdo</span> <span style="color:#5c5c5c;">=</span> <span style="color:#7f1f6f;">new</span> <span style="color:#262626;">PDO</span><span style="color:#262626;">(</span><span style="color:#262626;">DBCONNSTRING</span><span style="color:#262626;">,</span><span style="color:#262626;">DBUSER</span><span style="color:#262626;">,</span><span style="color:#262626;">DBPASS</span><span style="color:#262626;">)</span><span style="color:#262626;">;</span></span>
<span class="t c" style="left:1.0px;top:98.98px;font-family:'Liberation Mono',monospace;font-size:11px;letter-spacing:-0.3px">     <span style="color:#5a7f70;">//updated query to use the seed in checking login.</span></span>
<span class="t c" style="left:1.0px;top:112.50px;font-family:'Liberation Mono',monospace;font-size:11px;letter-spacing:-0.3px">     <span style="color:#262626;">$sql</span> <span style="color:#5c5c5c;">=</span> <span style="color:#3440a8;">&quot;SELECT * FROM URLS WHERE DomainID=(SELECT ID FROM DOMAINS WHERE DomainName=:domain) ORDER BY ID&quot;</span><span style="color:#262626;">;</span></span>
<span class="t c" style="left:1.0px;top:126.02px;font-family:'Liberation Mono',monospace;font-size:11px;letter-spacing:-0.3px">     <span style="color:#262626;">$statement</span> <span style="color:#5c5c5c;">=</span> <span style="color:#262626;">$pdo</span><span style="color:#262626;">-</span><span style="color:#262626;">&gt;</span><span style="color:#262626;">prepare</span><span style="color:#262626;">(</span><span style="color:#262626;">$sql</span><span style="color:#262626;">)</span><span style="color:#262626;">;</span></span>
<span class="t c" style="left:1.0px;top:139.54px;font-family:'Liberation Mono',monospace;font-size:11px;letter-spacing:-0.3px">     <span style="color:#262626;">$statement</span><span style="color:#262626;">-</span><span style="color:#262626;">&gt;</span><span style="color:#262626;">bindValue</span><span style="color:#262626;">(</span><span style="color:#3440a8;">&#x27;:domain&#x27;</span><span style="color:#262626;">,</span><span style="color:#262626;">$domainName</span><span style="color:#262626;">)</span><span style="color:#262626;">;</span></span>
<span class="t c" style="left:1.0px;top:153.06px;font-family:'Liberation Mono',monospace;font-size:11px;letter-spacing:-0.3px"></span>
<span class="t c" style="left:1.0px;top:166.58px;font-family:'Liberation Mono',monospace;font-size:11px;letter-spacing:-0.3px">     <span style="color:#262626;">$statement</span><span style="color:#262626;">-</span><span style="color:#262626;">&gt;</span><span style="color:#262626;">execute</span><span style="color:#262626;">(</span><span style="color:#262626;">)</span><span style="color:#262626;">;</span></span>
<span class="t c" style="left:1.0px;top:180.10px;font-family:'Liberation Mono',monospace;font-size:11px;letter-spacing:-0.3px">     <span style="color:#5a7f70;">//  echo $sql;</span></span>
<span class="t c" style="left:1.0px;top:193.62px;font-family:'Liberation Mono',monospace;font-size:11px;letter-spacing:-0.3px">     <span style="color:#7f1f6f;">if</span><span style="color:#262626;">(</span><span style="color:#262626;">$statement</span><span style="color:#262626;">-</span><span style="color:#262626;">&gt;</span><span style="color:#262626;">rowCount</span><span style="color:#262626;">(</span><span style="color:#262626;">)</span><span style="color:#262626;">&gt;</span><span style="color:#262626;">0</span><span style="color:#262626;">)</span><span style="color:#262626;">{</span></span>
<span class="t c" style="left:1.0px;top:207.14px;font-family:'Liberation Mono',monospace;font-size:11px;letter-spacing:-0.3px">       <span style="color:#5a7f70;">//Output the list. (and links in and out for each).</span></span>
<span class="t c" style="left:1.0px;top:220.66px;font-family:'Liberation Mono',monospace;font-size:11px;letter-spacing:-0.3px">       <span style="color:#7f1f6f;">while</span> <span style="color:#262626;">(</span><span style="color:#262626;">$row</span> <span style="color:#5c5c5c;">=</span> <span style="color:#262626;">$statement</span><span style="color:#262626;">-</span><span style="color:#262626;">&gt;</span><span style="color:#262626;">fetch</span><span style="color:#262626;">(</span><span style="color:#262626;">PDO</span><span style="color:#262626;">:</span><span style="color:#262626;">:</span><span style="color:#2234a8;font-style:italic">FETCH_ASSOC</span><span style="color:#262626;">,</span> <span style="color:#262626;">PDO</span><span style="color:#262626;">:</span><span style="color:#262626;">:</span><span style="color:#2234a8;font-style:italic">FETCH_ORI_NEXT</span><span style="color:#262626;">)</span><span style="color:#262626;">)</span> <span style="color:#262626;">{</span></span>
<span class="t c" style="left:1.0px;top:234.18px;font-family:'Liberation Mono',monospace;font-size:11px;letter-spacing:-0.3px">     <span style="color:#262626;">$data</span> <span style="color:#5c5c5c;">=</span> <span style="color:#262626;">$row</span><span style="color:#262626;">[</span><span style="color:#3440a8;">&quot;DomainID&quot;</span><span style="color:#262626;">]</span> <span style="color:#262626;">.</span> <span style="color:#3440a8;">&quot;\t&quot;</span> <span style="color:#262626;">.</span> <span style="color:#262626;">$row</span><span style="color:#262626;">[</span><span style="color:#3440a8;">&quot;Path&quot;</span><span style="color:#262626;">]</span> <span style="color:#262626;">.</span> <span style="color:#3440a8;">&quot;\t&quot;</span> <span style="color:#262626;">.</span> <span style="color:#262626;">$row</span><span style="color:#262626;">[</span><span style="color:#3440a8;">&quot;LastCrawled&quot;</span><span style="color:#262626;">]</span> <span style="color:#262626;">.</span> <span style="color:#3440a8;">&quot;\n&quot;</span><span style="color:#262626;">;</span></span>
<span class="t c" style="left:1.0px;top:247.70px;font-family:'Liberation Mono',monospace;font-size:11px;letter-spacing:-0.3px">     <span style="color:#7f1f6f;">echo</span> <span style="color:#262626;">$row</span><span style="color:#262626;">[</span><span style="color:#3440a8;">&#x27;Path&#x27;</span><span style="color:#262626;">]</span><span style="color:#262626;">.</span><span style="color:#3440a8;">&quot;&lt;br/&gt;&quot;</span><span style="color:#262626;">;</span></span>
<span class="t c" style="left:1.0px;top:261.22px;font-family:'Liberation Mono',monospace;font-size:11px;letter-spacing:-0.3px">       <span style="color:#262626;">}</span></span>
<span class="t c" style="left:1.0px;top:274.74px;font-family:'Liberation Mono',monospace;font-size:11px;letter-spacing:-0.3px">     <span style="color:#262626;">}</span></span>
<span class="t c" style="left:1.0px;top:288.26px;font-family:'Liberation Mono',monospace;font-size:11px;letter-spacing:-0.3px">     <span style="color:#7f1f6f;">return</span> <span style="color:#262626;">f</span><span style="color:#262626;">;</span></span>
<span class="t c" style="left:1.0px;top:301.78px;font-family:'Liberation Mono',monospace;font-size:11px;letter-spacing:-0.3px">  <span style="color:#262626;">}</span></span>
<span class="t c" style="left:1.0px;top:315.30px;font-family:'Liberation Mono',monospace;font-size:11px;letter-spacing:-0.3px">  <span style="color:#3d8a5c;">public</span> <span style="color:#7f1f6f;">function</span> <span style="color:#262626;">getNextURLToCrawl</span><span style="color:#262626;">(</span><span style="color:#262626;">)</span><span style="color:#262626;">{</span></span>
<span class="t c" style="left:1.0px;top:328.82px;font-family:'Liberation Mono',monospace;font-size:11px;letter-spacing:-0.3px">     <span style="color:#262626;">$pdo</span> <span style="color:#5c5c5c;">=</span> <span style="color:#7f1f6f;">new</span> <span style="color:#262626;">PDO</span><span style="color:#262626;">(</span><span style="color:#262626;">DBCONNSTRING</span><span style="color:#262626;">,</span><span style="color:#262626;">DBUSER</span><span style="color:#262626;">,</span><span style="color:#262626;">DBPASS</span><span style="color:#262626;">)</span><span style="color:#262626;">;</span></span>
<span class="t c" style="left:1.0px;top:342.34px;font-family:'Liberation Mono',monospace;font-size:11px;letter-spacing:-0.3px">     <span style="color:#262626;">$sql</span><span style="color:#5c5c5c;">=</span><span style="color:#3440a8;">&quot;SELECT URL.ID, URL.Path, DOMAINS.Name FROM URL JOIN DOMAINS ON DOMAINS.ID = URL.DomainID WHERE URL.DomainID=1 AND LastCrawled IS NULL&quot;</span><span style="color:#262626;">;</span></span>
<span class="t c" style="left:1.0px;top:355.86px;font-family:'Liberation Mono',monospace;font-size:11px;letter-spacing:-0.3px">     <span style="color:#262626;">$data</span> <span style="color:#5c5c5c;">=</span> <span style="color:#262626;">$pdo</span><span style="color:#262626;">-</span><span style="color:#262626;">&gt;</span><span style="color:#262626;">query</span><span style="color:#262626;">(</span><span style="color:#262626;">$sql</span><span style="color:#262626;">)</span><span style="color:#262626;">;</span></span>
</div>
<div style="left:497px;top:397.02000000000004px;width:2px;height:14px;background:#000"></div>
<svg style="position:absolute;left:404.5px;top:129.02px" width="9" height="9" viewBox="0 0 9 9"><circle cx="4.5" cy="4.5" r="3.8" fill="#e6eef7" stroke="#a9bdd4" stroke-width=".8"/><path d="M2.5 4.5h4" stroke="#6d8fb5" stroke-width="1"/></svg>
<svg style="position:absolute;left:404.5px;top:183.10000000000002px" width="9" height="9" viewBox="0 0 9 9"><circle cx="4.5" cy="4.5" r="3.8" fill="#e6eef7" stroke="#a9bdd4" stroke-width=".8"/><path d="M2.5 4.5h4" stroke="#6d8fb5" stroke-width="1"/></svg>
<svg style="position:absolute;left:404.5px;top:426.46000000000004px" width="9" height="9" viewBox="0 0 9 9"><circle cx="4.5" cy="4.5" r="3.8" fill="#e6eef7" stroke="#a9bdd4" stroke-width=".8"/><path d="M2.5 4.5h4" stroke="#6d8fb5" stroke-width="1"/></svg>
<div style="left:409px;top:825.7800000000001px;width:800px;height:14px;background:#e8f0fa"></div>
<div style="left:375px;top:825.7800000000001px;width:11px;height:14px;background:#b9d0ea"></div>
<div style="left:380px;top:501px;width:26px;height:360px;overflow:hidden">
<span class="t" style="left:11.70px;top:3.04px;font-family:'Liberation Mono',monospace;font-size:11px;letter-spacing:-0.3px;color:#858585">1</span>
<span class="t" style="left:11.70px;top:16.56px;font-family:'Liberation Mono',monospace;font-size:11px;letter-spacing:-0.3px;color:#858585">2</span>
<span class="t" style="left:11.70px;top:30.08px;font-family:'Liberation Mono',monospace;font-size:11px;letter-spacing:-0.3px;color:#858585">3</span>
<span class="t" style="left:11.70px;top:43.60px;font-family:'Liberation Mono',monospace;font-size:11px;letter-spacing:-0.3px;color:#858585">4</span>
<span class="t" style="left:11.70px;top:57.12px;font-family:'Liberation Mono',monospace;font-size:11px;letter-spacing:-0.3px;color:#858585">5</span>
<span class="t" style="left:11.70px;top:70.64px;font-family:'Liberation Mono',monospace;font-size:11px;letter-spacing:-0.3px;color:#858585">6</span>
<span class="t" style="left:11.70px;top:84.16px;font-family:'Liberation Mono',monospace;font-size:11px;letter-spacing:-0.3px;color:#858585">7</span>
<span class="t" style="left:11.70px;top:97.68px;font-family:'Liberation Mono',monospace;font-size:11px;letter-spacing:-0.3px;color:#858585">8</span>
<span class="t" style="left:11.70px;top:111.20px;font-family:'Liberation Mono',monospace;font-size:11px;letter-spacing:-0.3px;color:#858585">9</span>
<span class="t" style="left:5.40px;top:124.72px;font-family:'Liberation Mono',monospace;font-size:11px;letter-spacing:-0.3px;color:#858585">10</span>
<span class="t" style="left:5.40px;top:138.24px;font-family:'Liberation Mono',monospace;font-size:11px;letter-spacing:-0.3px;color:#858585">11</span>
<span class="t" style="left:5.40px;top:151.76px;font-family:'Liberation Mono',monospace;font-size:11px;letter-spacing:-0.3px;color:#858585">12</span>
<span class="t" style="left:5.40px;top:165.28px;font-family:'Liberation Mono',monospace;font-size:11px;letter-spacing:-0.3px;color:#858585">13</span>
<span class="t" style="left:5.40px;top:178.80px;font-family:'Liberation Mono',monospace;font-size:11px;letter-spacing:-0.3px;color:#858585">14</span>
<span class="t" style="left:5.40px;top:192.32px;font-family:'Liberation Mono',monospace;font-size:11px;letter-spacing:-0.3px;color:#858585">15</span>
<span class="t" style="left:5.40px;top:205.84px;font-family:'Liberation Mono',monospace;font-size:11px;letter-spacing:-0.3px;color:#858585">16</span>
<span class="t" style="left:5.40px;top:219.36px;font-family:'Liberation Mono',monospace;font-size:11px;letter-spacing:-0.3px;color:#858585">17</span>
<span class="t" style="left:5.40px;top:232.88px;font-family:'Liberation Mono',monospace;font-size:11px;letter-spacing:-0.3px;color:#858585">18</span>
<span class="t" style="left:5.40px;top:246.40px;font-family:'Liberation Mono',monospace;font-size:11px;letter-spacing:-0.3px;color:#858585">19</span>
<span class="t" style="left:5.40px;top:259.92px;font-family:'Liberation Mono',monospace;font-size:11px;letter-spacing:-0.3px;color:#858585">20</span>
<span class="t" style="left:5.40px;top:273.44px;font-family:'Liberation Mono',monospace;font-size:11px;letter-spacing:-0.3px;color:#858585">21</span>
<span class="t" style="left:5.40px;top:286.96px;font-family:'Liberation Mono',monospace;font-size:11px;letter-spacing:-0.3px;color:#858585">22</span>
<span class="t" style="left:5.40px;top:300.48px;font-family:'Liberation Mono',monospace;font-size:11px;letter-spacing:-0.3px;color:#858585">23</span>
<span class="t" style="left:5.40px;top:314.00px;font-family:'Liberation Mono',monospace;font-size:11px;letter-spacing:-0.3px;color:#858585">24</span>
<span class="t" style="left:5.40px;top:327.52px;font-family:'Liberation Mono',monospace;font-size:11px;letter-spacing:-0.3px;color:#858585">25</span>
<span class="t" style="left:5.40px;top:341.04px;font-family:'Liberation Mono',monospace;font-size:11px;letter-spacing:-0.3px;color:#858585">26</span>
<span class="t" style="left:5.40px;top:354.56px;font-family:'Liberation Mono',monospace;font-size:11px;letter-spacing:-0.3px;color:#858585">27</span>
</div>
<div style="left:407.5px;top:501px;width:801.5px;height:360px;overflow:hidden">
<span class="t c" style="left:2.1000000000000227px;top:2.34px;font-family:'Liberation Mono',monospace;font-size:11px;letter-spacing:-0.3px"><span style="color:#dc2632;">&lt;?php</span></span>
<span class="t c" style="left:2.1000000000000227px;top:15.86px;font-family:'Liberation Mono',monospace;font-size:11px;letter-spacing:-0.3px"></span>
<span class="t c" style="left:2.1000000000000227px;top:29.38px;font-family:'Liberation Mono',monospace;font-size:11px;letter-spacing:-0.3px"><span style="color:#262626;">$links</span> <span style="color:#5c5c5c;">=</span> <span style="color:#7f1f6f;">array</span><span style="color:#262626;">(</span><span style="color:#3440a8;">&quot;A&quot;</span> <span style="color:#5c5c5c;">=&gt;</span> <span style="color:#7f1f6f;">array</span><span style="color:#262626;">(</span><span style="color:#3440a8;">&quot;B&quot;</span><span style="color:#262626;">,</span><span style="color:#3440a8;">&quot;C&quot;</span><span style="color:#262626;">)</span><span style="color:#262626;">,</span></span>
<span class="t c" style="left:2.1000000000000227px;top:42.90px;font-family:'Liberation Mono',monospace;font-size:11px;letter-spacing:-0.3px">       <span style="color:#3440a8;">&quot;B&quot;</span> <span style="color:#5c5c5c;">=&gt;</span> <span style="color:#7f1f6f;">array</span><span style="color:#262626;">(</span><span style="color:#3440a8;">&quot;C&quot;</span><span style="color:#262626;">)</span><span style="color:#262626;">,</span></span>
<span class="t c" style="left:2.1000000000000227px;top:56.42px;font-family:'Liberation Mono',monospace;font-size:11px;letter-spacing:-0.3px">       <span style="color:#3440a8;">&quot;C&quot;</span> <span style="color:#5c5c5c;">=&gt;</span> <span style="color:#7f1f6f;">array</span><span style="color:#262626;">(</span><span style="color:#3440a8;">&quot;A&quot;</span><span style="color:#262626;">)</span><span style="color:#262626;">,</span></span>
<span class="t c" style="left:2.1000000000000227px;top:69.94px;font-family:'Liberation Mono',monospace;font-size:11px;letter-spacing:-0.3px">       <span style="color:#3440a8;">&quot;D&quot;</span> <span style="color:#5c5c5c;">=&gt;</span> <span style="color:#7f1f6f;">array</span><span style="color:#262626;">(</span><span style="color:#3440a8;">&quot;C&quot;</span><span style="color:#262626;">)</span><span style="color:#262626;">,</span></span>
<span class="t c" style="left:2.1000000000000227px;top:83.46px;font-family:'Liberation Mono',monospace;font-size:11px;letter-spacing:-0.3px">       <span style="color:#3440a8;">&quot;E&quot;</span> <span style="color:#5c5c5c;">=&gt;</span> <span style="color:#7f1f6f;">array</span><span style="color:#262626;">(</span><span style="color:#3440a8;">&quot;B&quot;</span><span style="color:#262626;">,</span><span style="color:#3440a8;">&quot;D&quot;</span><span style="color:#262626;">)</span><span style="color:#262626;">)</span><span style="color:#262626;">;</span></span>
<span class="t c" style="left:2.1000000000000227px;top:96.98px;font-family:'Liberation Mono',monospace;font-size:11px;letter-spacing:-0.3px"></span>
<span class="t c" style="left:2.1000000000000227px;top:110.50px;font-family:'Liberation Mono',monospace;font-size:11px;letter-spacing:-0.3px"></span>
<span class="t c" style="left:2.1000000000000227px;top:124.02px;font-family:'Liberation Mono',monospace;font-size:11px;letter-spacing:-0.3px"><span style="color:#5a7f70;">//build Backlinks list.</span></span>
<span class="t c" style="left:2.1000000000000227px;top:137.54px;font-family:'Liberation Mono',monospace;font-size:11px;letter-spacing:-0.3px"><span style="color:#262626;">$backlinks</span><span style="color:#5c5c5c;">=</span><span style="color:#7f1f6f;">array</span><span style="color:#262626;">(</span><span style="color:#262626;">)</span><span style="color:#262626;">;</span></span>
<span class="t c" style="left:2.1000000000000227px;top:151.06px;font-family:'Liberation Mono',monospace;font-size:11px;letter-spacing:-0.3px"><span style="color:#7f1f6f;">foreach</span><span style="color:#262626;">(</span><span style="color:#262626;">$links</span> <span style="color:#7f1f6f;">as</span> <span style="color:#262626;">$site</span> <span style="color:#5c5c5c;">=&gt;</span> <span style="color:#262626;">$linksOut</span><span style="color:#262626;">)</span><span style="color:#262626;">{</span></span>
<span class="t c" style="left:2.1000000000000227px;top:164.58px;font-family:'Liberation Mono',monospace;font-size:11px;letter-spacing:-0.3px">  <span style="color:#7f1f6f;">foreach</span><span style="color:#262626;">(</span><span style="color:#262626;">$links</span> <span style="color:#7f1f6f;">as</span> <span style="color:#262626;">$blSite</span> <span style="color:#5c5c5c;">=&gt;</span> <span style="color:#262626;">$backL</span><span style="color:#262626;">)</span><span style="color:#262626;">{</span></span>
<span class="t c" style="left:2.1000000000000227px;top:178.10px;font-family:'Liberation Mono',monospace;font-size:11px;letter-spacing:-0.3px">     <span style="color:#7f1f6f;">foreach</span><span style="color:#262626;">(</span><span style="color:#262626;">$backL</span> <span style="color:#7f1f6f;">as</span> <span style="color:#262626;">$L</span><span style="color:#262626;">)</span><span style="color:#262626;">{</span></span>
<span class="t c" style="left:2.1000000000000227px;top:191.62px;font-family:'Liberation Mono',monospace;font-size:11px;letter-spacing:-0.3px">       <span style="color:#7f1f6f;">if</span><span style="color:#262626;">(</span><span style="color:#262626;">$L</span><span style="color:#5c5c5c;">==</span><span style="color:#262626;">$site</span><span style="color:#262626;">)</span><span style="color:#262626;">{</span></span>
<span class="t c" style="left:2.1000000000000227px;top:205.14px;font-family:'Liberation Mono',monospace;font-size:11px;letter-spacing:-0.3px">    <span style="color:#262626;">$backlinks</span><span style="color:#262626;">[</span><span style="color:#262626;">$L</span><span style="color:#262626;">]</span><span style="color:#262626;">[</span><span style="color:#262626;">]</span><span style="color:#5c5c5c;">=</span><span style="color:#262626;">$blSite</span><span style="color:#262626;">;</span></span>
<span class="t c" style="left:2.1000000000000227px;top:218.66px;font-family:'Liberation Mono',monospace;font-size:11px;letter-spacing:-0.3px">       <span style="color:#262626;">}</span></span>
<span class="t c" style="left:2.1000000000000227px;top:232.18px;font-family:'Liberation Mono',monospace;font-size:11px;letter-spacing:-0.3px">     <span style="color:#262626;">}</span></span>
<span class="t c" style="left:2.1000000000000227px;top:245.70px;font-family:'Liberation Mono',monospace;font-size:11px;letter-spacing:-0.3px">  <span style="color:#262626;">}</span></span>
<span class="t c" style="left:2.1000000000000227px;top:259.22px;font-family:'Liberation Mono',monospace;font-size:11px;letter-spacing:-0.3px"><span style="color:#262626;">}</span></span>
<span class="t c" style="left:2.1000000000000227px;top:272.74px;font-family:'Liberation Mono',monospace;font-size:11px;letter-spacing:-0.3px"><span style="color:#262626;">print_r</span><span style="color:#262626;">(</span><span style="color:#262626;">$backlinks</span><span style="color:#262626;">)</span><span style="color:#262626;">;</span></span>
<span class="t c" style="left:2.1000000000000227px;top:286.26px;font-family:'Liberation Mono',monospace;font-size:11px;letter-spacing:-0.3px"></span>
<span class="t c" style="left:2.1000000000000227px;top:299.78px;font-family:'Liberation Mono',monospace;font-size:11px;letter-spacing:-0.3px"><span style="color:#5a7f70;">//pagerankArray;</span></span>
<span class="t c" style="left:2.1000000000000227px;top:313.30px;font-family:'Liberation Mono',monospace;font-size:11px;letter-spacing:-0.3px"><span style="color:#262626;">$pageRank</span> <span style="color:#5c5c5c;">=</span> <span style="color:#7f1f6f;">array</span><span style="color:#262626;">(</span><span style="color:#3440a8;">&quot;A&quot;</span><span style="color:#5c5c5c;">=&gt;</span><span style="color:#262626;">1</span><span style="color:#262626;">,</span><span style="color:#3440a8;">&quot;B&quot;</span><span style="color:#5c5c5c;">=&gt;</span><span style="color:#262626;">1</span><span style="color:#262626;">,</span><span style="color:#3440a8;">&quot;C&quot;</span><span style="color:#5c5c5c;">=&gt;</span><span style="color:#262626;">1</span><span style="color:#262626;">,</span><span style="color:#3440a8;">&quot;D&quot;</span><span style="color:#5c5c5c;">=&gt;</span><span style="color:#262626;">1</span><span style="color:#262626;">,</span><span style="color:#3440a8;">&quot;E&quot;</span><span style="color:#5c5c5c;">=&gt;</span><span style="color:#262626;">1</span><span style="color:#262626;">)</span><span style="color:#262626;">;</span></span>
<span class="t c" style="left:2.1000000000000227px;top:326.82px;font-family:'Liberation Mono',monospace;font-size:11px;letter-spacing:-0.3px"><span style="color:#262626;">$tempPageRank</span><span style="color:#5c5c5c;">=</span> <span style="color:#7f1f6f;">array</span><span style="color:#262626;">(</span><span style="color:#3440a8;">&quot;A&quot;</span><span style="color:#5c5c5c;">=&gt;</span><span style="color:#262626;">1</span><span style="color:#262626;">,</span><span style="color:#3440a8;">&quot;B&quot;</span><span style="color:#5c5c5c;">=&gt;</span><span style="color:#262626;">1</span><span style="color:#262626;">,</span><span style="color:#3440a8;">&quot;C&quot;</span><span style="color:#5c5c5c;">=&gt;</span><span style="color:#262626;">1</span><span style="color:#262626;">,</span><span style="color:#3440a8;">&quot;D&quot;</span><span style="color:#5c5c5c;">=&gt;</span><span style="color:#262626;">1</span><span style="color:#262626;">,</span><span style="color:#3440a8;">&quot;E&quot;</span><span style="color:#5c5c5c;">=&gt;</span><span style="color:#262626;">1</span><span style="color:#262626;">)</span><span style="color:#262626;">;</span></span>
<span class="t c" style="left:2.1000000000000227px;top:340.34px;font-family:'Liberation Mono',monospace;font-size:11px;letter-spacing:-0.3px"></span>
<span class="t c" style="left:2.1000000000000227px;top:353.86px;font-family:'Liberation Mono',monospace;font-size:11px;letter-spacing:-0.3px"></span>
</div>
<svg style="position:absolute;left:1236.5px;top:80px" width="11" height="12" viewBox="0 0 11 12"><path d="M.5 .5H7.5L10.5 3.5V11.5H.5z" fill="#f4f7fb" stroke="#8a9bb5"/><path d="M7.5 .5V3.5H10.5" fill="#fff4d0" stroke="#d9b45a"/><path d="M3.5 9.5V3h2.2a1.7 1.7 0 010 3.4H3.5" fill="none" stroke="#3a72b8" stroke-width="1.4"/></svg>
<span class="t" style="left:1252.3px;top:81.08px;font-size:10.5px;font-family:'Liberation Sans',sans-serif;color:#1e1e1e;">PHP Functions</span>
<svg style="position:absolute;left:1327.5px;top:81px" width="10" height="10" viewBox="0 0 10 10"><path d="M2.1 2.1L7.9 7.9M7.9 2.1L2.1 7.9" stroke="#333" stroke-width="3.5" stroke-linecap="round"/><path d="M2.1 2.1L7.9 7.9M7.9 2.1L2.1 7.9" stroke="#fff" stroke-width="1.7" stroke-linecap="round"/></svg>
<span class="t" style="left:1350px;top:81.08px;font-size:10.5px;font-family:'Liberation Sans',sans-serif;color:#a8c4dc;">@</span>
<span class="t" style="left:1366px;top:81.08px;font-size:10.5px;font-family:'Liberation Sans',sans-serif;color:#8c8c8c;">Documentation</span>
<svg style="position:absolute;left:1608px;top:80px" width="9" height="5" viewBox="0 0 9 5"><rect x=".75" y=".75" width="7.5" height="3" rx=".5" fill="#fff" stroke="#2a2a2a" stroke-width="1.4"/><path d="M1.4 1.2h6.2" stroke="#888" stroke-width=".8"/></svg>
<svg style="position:absolute;left:1627.0px;top:79.5px" width="10" height="10.5" viewBox="0 0 10 10.5"><rect x=".75" y=".75" width="8.5" height="8.7" rx=".6" fill="#fff" stroke="#333" stroke-width="1.4"/><rect x="1.4" y="1.4" width="7.2" height="1.6" fill="#8a8a8a"/></svg>
<div style="left:1232px;top:99px;width:414px;height:17px;background:#fff;border:1px solid #cfcfcf;border-radius:4px"></div>
<span class="t" style="left:1242.3px;top:102.28px;font-size:10.5px;font-family:'Liberation Sans',sans-serif;color:#c6c6c6;">type filter text</span>
<div style="left:1232px;top:120px;width:414.5px;height:346.5px;background:#fff;border:1px solid #c8c8c8;border-radius:0 0 3px 3px"></div>
<div style="left:1233px;top:121px;width:412.5px;height:344.5px;overflow:hidden">
<svg style="position:absolute;left:0.7999999999999545px;top:-5.7000000000000055px" width="12.6" height="12.6" viewBox="0 0 12.6 12.6"><circle cx="6.3" cy="6.3" r="6.0" fill="#2f9a4a"/><circle cx="6.3" cy="6.3" r="5.0" fill="#3aa85a" stroke="#1f7a35" stroke-width=".5"/><path d="M8.9 4.4A2.9 2.9 0 1 0 8.9 8.2" fill="none" stroke="#fff" stroke-width="1.8"/></svg>
<span class="t" style="left:22px;top:-4.33px;font-size:10.5px;font-family:'Liberation Sans',sans-serif;color:#262626;">Generator</span>
<svg style="position:absolute;left:0.7999999999999545px;top:9.624999999999982px" width="12.6" height="12.6" viewBox="0 0 12.6 12.6"><circle cx="6.3" cy="6.3" r="6.0" fill="#2f9a4a"/><circle cx="6.3" cy="6.3" r="5.0" fill="#3aa85a" stroke="#1f7a35" stroke-width=".5"/><path d="M8.9 4.4A2.9 2.9 0 1 0 8.9 8.2" fill="none" stroke="#fff" stroke-width="1.8"/></svg>
<span class="t" style="left:22px;top:11.00px;font-size:10.5px;font-family:'Liberation Sans',sans-serif;color:#262626;">GlobIterator</span>
<svg style="position:absolute;left:0.7999999999999545px;top:24.95px" width="12.6" height="12.6" viewBox="0 0 12.6 12.6"><circle cx="6.3" cy="6.3" r="6.0" fill="#2f9a4a"/><circle cx="6.3" cy="6.3" r="5.0" fill="#3aa85a" stroke="#1f7a35" stroke-width=".5"/><path d="M8.9 4.4A2.9 2.9 0 1 0 8.9 8.2" fill="none" stroke="#fff" stroke-width="1.8"/></svg>
<span class="t" style="left:22px;top:26.33px;font-size:10.5px;font-family:'Liberation Sans',sans-serif;color:#262626;">GMP</span>
<svg style="position:absolute;left:0.7999999999999545px;top:40.27499999999999px" width="12.6" height="12.6" viewBox="0 0 12.6 12.6"><circle cx="6.3" cy="6.3" r="6.0" fill="#2f9a4a"/><circle cx="6.3" cy="6.3" r="5.0" fill="#3aa85a" stroke="#1f7a35" stroke-width=".5"/><path d="M8.9 4.4A2.9 2.9 0 1 0 8.9 8.2" fill="none" stroke="#fff" stroke-width="1.8"/></svg>
<span class="t" style="left:22px;top:41.65px;font-size:10.5px;font-family:'Liberation Sans',sans-serif;color:#262626;">Imagick</span>
<svg style="position:absolute;left:0.7999999999999545px;top:55.59999999999998px" width="12.6" height="12.6" viewBox="0 0 12.6 12.6"><circle cx="6.3" cy="6.3" r="6.0" fill="#2f9a4a"/><circle cx="6.3" cy="6.3" r="5.0" fill="#3aa85a" stroke="#1f7a35" stroke-width=".5"/><path d="M8.9 4.4A2.9 2.9 0 1 0 8.9 8.2" fill="none" stroke="#fff" stroke-width="1.8"/></svg>
<span class="t" style="left:22px;top:56.97px;font-size:10.5px;font-family:'Liberation Sans',sans-serif;color:#262626;">ImagickDraw</span>
<svg style="position:absolute;left:0.7999999999999545px;top:70.925px" width="12.6" height="12.6" viewBox="0 0 12.6 12.6"><circle cx="6.3" cy="6.3" r="6.0" fill="#2f9a4a"/><circle cx="6.3" cy="6.3" r="5.0" fill="#3aa85a" stroke="#1f7a35" stroke-width=".5"/><path d="M8.9 4.4A2.9 2.9 0 1 0 8.9 8.2" fill="none" stroke="#fff" stroke-width="1.8"/></svg>
<span class="t" style="left:22px;top:72.30px;font-size:10.5px;font-family:'Liberation Sans',sans-serif;color:#262626;">ImagickDrawException</span>
<svg style="position:absolute;left:0.7999999999999545px;top:86.24999999999999px" width="12.6" height="12.6" viewBox="0 0 12.6 12.6"><circle cx="6.3" cy="6.3" r="6.0" fill="#2f9a4a"/><circle cx="6.3" cy="6.3" r="5.0" fill="#3aa85a" stroke="#1f7a35" stroke-width=".5"/><path d="M8.9 4.4A2.9 2.9 0 1 0 8.9 8.2" fill="none" stroke="#fff" stroke-width="1.8"/></svg>
<span class="t" style="left:22px;top:87.62px;font-size:10.5px;font-family:'Liberation Sans',sans-serif;color:#262626;">ImagickException</span>
<svg style="position:absolute;left:0.7999999999999545px;top:101.575px" width="12.6" height="12.6" viewBox="0 0 12.6 12.6"><circle cx="6.3" cy="6.3" r="6.0" fill="#2f9a4a"/><circle cx="6.3" cy="6.3" r="5.0" fill="#3aa85a" stroke="#1f7a35" stroke-width=".5"/><path d="M8.9 4.4A2.9 2.9 0 1 0 8.9 8.2" fill="none" stroke="#fff" stroke-width="1.8"/></svg>
<span class="t" style="left:22px;top:102.95px;font-size:10.5px;font-family:'Liberation Sans',sans-serif;color:#262626;">ImagickPixel</span>
<svg style="position:absolute;left:0.7999999999999545px;top:116.89999999999999px" width="12.6" height="12.6" viewBox="0 0 12.6 12.6"><circle cx="6.3" cy="6.3" r="6.0" fill="#2f9a4a"/><circle cx="6.3" cy="6.3" r="5.0" fill="#3aa85a" stroke="#1f7a35" stroke-width=".5"/><path d="M8.9 4.4A2.9 2.9 0 1 0 8.9 8.2" fill="none" stroke="#fff" stroke-width="1.8"/></svg>
<span class="t" style="left:22px;top:118.27px;font-size:10.5px;font-family:'Liberation Sans',sans-serif;color:#262626;">ImagickPixelException</span>
<svg style="position:absolute;left:0.7999999999999545px;top:132.22499999999997px" width="12.6" height="12.6" viewBox="0 0 12.6 12.6"><circle cx="6.3" cy="6.3" r="6.0" fill="#2f9a4a"/><circle cx="6.3" cy="6.3" r="5.0" fill="#3aa85a" stroke="#1f7a35" stroke-width=".5"/><path d="M8.9 4.4A2.9 2.9 0 1 0 8.9 8.2" fill="none" stroke="#fff" stroke-width="1.8"/></svg>
<span class="t" style="left:22px;top:133.60px;font-size:10.5px;font-family:'Liberation Sans',sans-serif;color:#262626;">ImagickPixelIterator</span>
<svg style="position:absolute;left:0.7999999999999545px;top:147.55px" width="12.6" height="12.6" viewBox="0 0 12.6 12.6"><circle cx="6.3" cy="6.3" r="6.0" fill="#2f9a4a"/><circle cx="6.3" cy="6.3" r="5.0" fill="#3aa85a" stroke="#1f7a35" stroke-width=".5"/><path d="M8.9 4.4A2.9 2.9 0 1 0 8.9 8.2" fill="none" stroke="#fff" stroke-width="1.8"/></svg>
<span class="t" style="left:22px;top:148.93px;font-size:10.5px;font-family:'Liberation Sans',sans-serif;color:#262626;">ImagickPixelIteratorException</span>
<svg style="position:absolute;left:0.7999999999999545px;top:162.87499999999994px" width="12.6" height="12.6" viewBox="0 0 12.6 12.6"><circle cx="6.3" cy="6.3" r="6.0" fill="#2f9a4a"/><circle cx="6.3" cy="6.3" r="5.0" fill="#3aa85a" stroke="#1f7a35" stroke-width=".5"/><path d="M8.9 4.4A2.9 2.9 0 1 0 8.9 8.2" fill="none" stroke="#fff" stroke-width="1.8"/></svg>
<span class="t" style="left:22px;top:164.25px;font-size:10.5px;font-family:'Liberation Sans',sans-serif;color:#262626;">InfiniteIterator</span>
<svg style="position:absolute;left:0.7999999999999545px;top:178.2px" width="12.6" height="12.6" viewBox="0 0 12.6 12.6"><circle cx="6.3" cy="6.3" r="6.0" fill="#2f9a4a"/><circle cx="6.3" cy="6.3" r="5.0" fill="#3aa85a" stroke="#1f7a35" stroke-width=".5"/><path d="M8.9 4.4A2.9 2.9 0 1 0 8.9 8.2" fill="none" stroke="#fff" stroke-width="1.8"/></svg>
<span class="t" style="left:22px;top:179.57px;font-size:10.5px;font-family:'Liberation Sans',sans-serif;color:#262626;">IntlBreakIterator</span>
<svg style="position:absolute;left:0.7999999999999545px;top:193.52499999999998px" width="12.6" height="12.6" viewBox="0 0 12.6 12.6"><circle cx="6.3" cy="6.3" r="6.0" fill="#2f9a4a"/><circle cx="6.3" cy="6.3" r="5.0" fill="#3aa85a" stroke="#1f7a35" stroke-width=".5"/><path d="M8.9 4.4A2.9 2.9 0 1 0 8.9 8.2" fill="none" stroke="#fff" stroke-width="1.8"/></svg>
<span class="t" style="left:22px;top:194.90px;font-size:10.5px;font-family:'Liberation Sans',sans-serif;color:#262626;">IntlCalendar</span>
<svg style="position:absolute;left:0.7999999999999545px;top:208.84999999999997px" width="12.6" height="12.6" viewBox="0 0 12.6 12.6"><circle cx="6.3" cy="6.3" r="6.0" fill="#2f9a4a"/><circle cx="6.3" cy="6.3" r="5.0" fill="#3aa85a" stroke="#1f7a35" stroke-width=".5"/><path d="M8.9 4.4A2.9 2.9 0 1 0 8.9 8.2" fill="none" stroke="#fff" stroke-width="1.8"/></svg>
<span class="t" style="left:22px;top:210.22px;font-size:10.5px;font-family:'Liberation Sans',sans-serif;color:#262626;">IntlChar</span>
<svg style="position:absolute;left:0.7999999999999545px;top:224.175px" width="12.6" height="12.6" viewBox="0 0 12.6 12.6"><circle cx="6.3" cy="6.3" r="6.0" fill="#2f9a4a"/><circle cx="6.3" cy="6.3" r="5.0" fill="#3aa85a" stroke="#1f7a35" stroke-width=".5"/><path d="M8.9 4.4A2.9 2.9 0 1 0 8.9 8.2" fill="none" stroke="#fff" stroke-width="1.8"/></svg>
<span class="t" style="left:22px;top:225.55px;font-size:10.5px;font-family:'Liberation Sans',sans-serif;color:#262626;">IntlCodePointBreakIterator</span>
<svg style="position:absolute;left:0.7999999999999545px;top:239.49999999999994px" width="12.6" height="12.6" viewBox="0 0 12.6 12.6"><circle cx="6.3" cy="6.3" r="6.0" fill="#2f9a4a"/><circle cx="6.3" cy="6.3" r="5.0" fill="#3aa85a" stroke="#1f7a35" stroke-width=".5"/><path d="M8.9 4.4A2.9 2.9 0 1 0 8.9 8.2" fill="none" stroke="#fff" stroke-width="1.8"/></svg>
<span class="t" style="left:22px;top:240.87px;font-size:10.5px;font-family:'Liberation Sans',sans-serif;color:#262626;">IntlDateFormatter</span>
<svg style="position:absolute;left:0.7999999999999545px;top:254.825px" width="12.6" height="12.6" viewBox="0 0 12.6 12.6"><circle cx="6.3" cy="6.3" r="6.0" fill="#2f9a4a"/><circle cx="6.3" cy="6.3" r="5.0" fill="#3aa85a" stroke="#1f7a35" stroke-width=".5"/><path d="M8.9 4.4A2.9 2.9 0 1 0 8.9 8.2" fill="none" stroke="#fff" stroke-width="1.8"/></svg>
<span class="t" style="left:22px;top:256.20px;font-size:10.5px;font-family:'Liberation Sans',sans-serif;color:#262626;">IntlException</span>
<svg style="position:absolute;left:0.7999999999999545px;top:270.1499999999999px" width="12.6" height="12.6" viewBox="0 0 12.6 12.6"><circle cx="6.3" cy="6.3" r="6.0" fill="#2f9a4a"/><circle cx="6.3" cy="6.3" r="5.0" fill="#3aa85a" stroke="#1f7a35" stroke-width=".5"/><path d="M8.9 4.4A2.9 2.9 0 1 0 8.9 8.2" fill="none" stroke="#fff" stroke-width="1.8"/></svg>
<span class="t" style="left:22px;top:271.52px;font-size:10.5px;font-family:'Liberation Sans',sans-serif;color:#262626;">IntlGregorianCalendar</span>
<svg style="position:absolute;left:0.7999999999999545px;top:285.47499999999997px" width="12.6" height="12.6" viewBox="0 0 12.6 12.6"><circle cx="6.3" cy="6.3" r="6.0" fill="#2f9a4a"/><circle cx="6.3" cy="6.3" r="5.0" fill="#3aa85a" stroke="#1f7a35" stroke-width=".5"/><path d="M8.9 4.4A2.9 2.9 0 1 0 8.9 8.2" fill="none" stroke="#fff" stroke-width="1.8"/></svg>
<span class="t" style="left:22px;top:286.85px;font-size:10.5px;font-family:'Liberation Sans',sans-serif;color:#262626;">IntlIterator</span>
<svg style="position:absolute;left:0.7999999999999545px;top:300.8px" width="12.6" height="12.6" viewBox="0 0 12.6 12.6"><circle cx="6.3" cy="6.3" r="6.0" fill="#2f9a4a"/><circle cx="6.3" cy="6.3" r="5.0" fill="#3aa85a" stroke="#1f7a35" stroke-width=".5"/><path d="M8.9 4.4A2.9 2.9 0 1 0 8.9 8.2" fill="none" stroke="#fff" stroke-width="1.8"/></svg>
<span class="t" style="left:22px;top:302.18px;font-size:10.5px;font-family:'Liberation Sans',sans-serif;color:#262626;">IntlPartsIterator</span>
<div style="left:0px;top:315.92499999999995px;width:412.5px;height:14.1px;background:#dcdcdc"></div>
<svg style="position:absolute;left:0.7999999999999545px;top:316.12499999999994px" width="12.6" height="12.6" viewBox="0 0 12.6 12.6"><circle cx="6.3" cy="6.3" r="6.0" fill="#2f9a4a"/><circle cx="6.3" cy="6.3" r="5.0" fill="#3aa85a" stroke="#1f7a35" stroke-width=".5"/><path d="M8.9 4.4A2.9 2.9 0 1 0 8.9 8.2" fill="none" stroke="#fff" stroke-width="1.8"/></svg>
<span class="t" style="left:22px;top:317.50px;font-size:10.5px;font-family:'Liberation Sans',sans-serif;color:#262626;">IntlRuleBasedBreakIterator</span>
<svg style="position:absolute;left:0.7999999999999545px;top:331.45px" width="12.6" height="12.6" viewBox="0 0 12.6 12.6"><circle cx="6.3" cy="6.3" r="6.0" fill="#2f9a4a"/><circle cx="6.3" cy="6.3" r="5.0" fill="#3aa85a" stroke="#1f7a35" stroke-width=".5"/><path d="M8.9 4.4A2.9 2.9 0 1 0 8.9 8.2" fill="none" stroke="#fff" stroke-width="1.8"/></svg>
<span class="t" style="left:22px;top:332.82px;font-size:10.5px;font-family:'Liberation Sans',sans-serif;color:#262626;">IntlTimeZone</span>
<svg style="position:absolute;left:0.7999999999999545px;top:346.7749999999999px" width="12.6" height="12.6" viewBox="0 0 12.6 12.6"><circle cx="6.3" cy="6.3" r="6.0" fill="#2f9a4a"/><circle cx="6.3" cy="6.3" r="5.0" fill="#3aa85a" stroke="#1f7a35" stroke-width=".5"/><path d="M8.9 4.4A2.9 2.9 0 1 0 8.9 8.2" fill="none" stroke="#fff" stroke-width="1.8"/></svg>
<span class="t" style="left:22px;top:348.15px;font-size:10.5px;font-family:'Liberation Sans',sans-serif;color:#262626;">IntlTimeZoneX</span>
</div>
<svg style="position:absolute;left:1234px;top:476.5px" width="11" height="15" viewBox="0 0 11 15"><path d="M2.5 3v10M2.5 7.5h4M2.5 12.5h4" stroke="#5a6a7a" stroke-width="1"/><circle cx="2.5" cy="2.5" r="2.2" fill="#4aaa5a"/><circle cx="8" cy="7.5" r="2.3" fill="#4aaa5a"/><circle cx="8" cy="12.5" r="2.3" fill="#4aaa5a"/></svg>
<span class="t" style="left:1252.3px;top:479.47px;font-size:10.5px;font-family:'Liberation Sans',sans-serif;color:#1e1e1e;">Type Hierarchy</span>
<svg style="position:absolute;left:1330.5px;top:479.5px" width="10" height="10" viewBox="0 0 10 10"><path d="M2.1 2.1L7.9 7.9M7.9 2.1L2.1 7.9" stroke="#333" stroke-width="3.5" stroke-linecap="round"/><path d="M2.1 2.1L7.9 7.9M7.9 2.1L2.1 7.9" stroke="#fff" stroke-width="1.7" stroke-linecap="round"/></svg>
<svg style="position:absolute;left:1590.5px;top:479px" width="10" height="6" viewBox="0 0 10 6"><path d="M.8 .8H9.2L5 5.2z" fill="#fff" stroke="#333" stroke-width="1.2"/></svg>
<svg style="position:absolute;left:1608.5px;top:479px" width="9" height="5" viewBox="0 0 9 5"><rect x=".75" y=".75" width="7.5" height="3" rx=".5" fill="#fff" stroke="#2a2a2a" stroke-width="1.4"/><path d="M1.4 1.2h6.2" stroke="#888" stroke-width=".8"/></svg>
<svg style="position:absolute;left:1627.0px;top:478.8px" width="10" height="10.5" viewBox="0 0 10 10.5"><rect x=".75" y=".75" width="8.5" height="8.7" rx=".6" fill="#fff" stroke="#333" stroke-width="1.4"/><rect x="1.4" y="1.4" width="7.2" height="1.6" fill="#8a8a8a"/></svg>
<span class="t" style="left:1234.6px;top:498.07px;font-size:10.5px;font-family:'Liberation Sans',sans-serif;color:#1e1e1e;">Crawler, working set: Window Working Set</span>
<div style="left:1233px;top:510px;width:413px;height:1px;background:#b9b9b9"></div>
<svg style="position:absolute;left:1236px;top:514px" width="13" height="13" viewBox="0 0 13 13"><path d="M2.5 3v4h5M7.5 7v4h2" fill="none" stroke="#5a6a7a"/><circle cx="2.5" cy="2.5" r="2" fill="#4aaa5a"/><rect x="7" y="5" width="4" height="3" fill="#e8b040"/><rect x="9" y="9.5" width="4" height="3" fill="#e8b040"/></svg>
<svg style="position:absolute;left:1256px;top:514px" width="13" height="13" viewBox="0 0 13 13"><path d="M2.5 2v9M10 2v9M8.5 3.5L10 1.5l1.5 2" fill="none" stroke="#5a6a7a"/><rect x="0" y="3" width="3.5" height="3" fill="#e8b040"/><circle cx="10" cy="11" r="2" fill="#4aaa5a"/></svg>
<div style="left:1272px;top:512px;width:20px;height:19px;background:#d8d8d8;border:1px solid #c4c4c4"></div>
<svg style="position:absolute;left:1275px;top:514px" width="13" height="14" viewBox="0 0 13 14"><path d="M2.5 3v9M1 10.5l1.5 2 1.5-2M7.5 4v7" fill="none" stroke="#5a6a7a"/><circle cx="2.5" cy="2.5" r="2" fill="#4aaa5a"/><rect x="8" y="6" width="4" height="3" fill="#e8b040"/><rect x="8" y="10" width="4" height="3" fill="#e8b040"/></svg>
<svg style="position:absolute;left:1295px;top:514px" width="12" height="14" viewBox="0 0 12 14"><rect x=".5" y=".5" width="10" height="13" fill="#f4f7fb" stroke="#8a9bb5"/><path d="M2.5 3h6M2.5 6h6M2.5 9h6" stroke="#6a8ac0"/><circle cx="2.5" cy="3" r="1" fill="#4aaa5a"/><circle cx="2.5" cy="6" r="1" fill="#4aaa5a"/><circle cx="2.5" cy="9" r="1" fill="#4aaa5a"/></svg>
<svg style="position:absolute;left:1311px;top:519px" width="6" height="4" viewBox="0 0 6 4"><path d="M0 0h6L3 4z" fill="#333"/></svg>
<div style="left:1232px;top:533px;width:143.5px;height:14.5px;background:#dcdcdc"></div>
<svg style="position:absolute;left:1249.7px;top:533.8px" width="13" height="13" viewBox="0 0 13 13"><circle cx="6.5" cy="6.5" r="6.2" fill="#2f9a4a"/><circle cx="6.5" cy="6.5" r="5.2" fill="#3aa85a" stroke="#1f7a35" stroke-width=".5"/><path d="M9.1 4.6A2.9 2.9 0 1 0 9.1 8.4" fill="none" stroke="#fff" stroke-width="1.8"/></svg>
<span class="t" style="left:1271.2px;top:535.28px;font-size:10.5px;font-family:'Liberation Sans',sans-serif;color:#262626;">Crawler</span>
<svg style="position:absolute;left:1381.6px;top:515.4px" width="12.8" height="12.8" viewBox="0 0 12.8 12.8"><circle cx="6.4" cy="6.4" r="6.1000000000000005" fill="#2f9a4a"/><circle cx="6.4" cy="6.4" r="5.1000000000000005" fill="#3aa85a" stroke="#1f7a35" stroke-width=".5"/><path d="M9.0 4.5A2.9 2.9 0 1 0 9.0 8.3" fill="none" stroke="#fff" stroke-width="1.8"/></svg>
<span class="t" style="left:1405.5px;top:517.28px;font-size:10.5px;font-family:'Liberation Sans',sans-serif;color:#262626;">Crawler</span>
<svg style="position:absolute;left:1584px;top:515px" width="16" height="13" viewBox="0 0 16 13"><path d="M0 6.5h6M4 4l2.5 2.5L4 9" fill="none" stroke="#e8a020" stroke-width="1.5"/><path d="M9.5 1v11M9.5 3h3M9.5 7h3M9.5 11h3" stroke="#6a7a9a"/><rect x="12" y="1.5" width="3" height="3" fill="#9ab"/><rect x="12" y="5.5" width="3" height="3" fill="#9ab"/><rect x="12" y="9.5" width="3" height="3" fill="#9ab"/></svg>
<div style="left:1605px;top:513px;width:1px;height:18px;background:#e0e0e0"></div>
<svg style="position:absolute;left:1611px;top:513px" width="14" height="15" viewBox="0 0 14 15"><path d="M3 4v9h5M3 8.5h5" fill="none" stroke="#5a6a7a"/><circle cx="3" cy="3" r="2.2" fill="#4aaa5a"/><rect x="8" y="7" width="4" height="3" fill="#e8b040"/><rect x="8" y="11" width="4" height="3" fill="#e8b040"/></svg>
<svg style="position:absolute;left:1629px;top:513px" width="16" height="15" viewBox="0 0 16 15"><path d="M3 2v11M1 11l2 2.5L5 11" fill="none" stroke="#4a6aa0" stroke-width="1.2"/><circle cx="10" cy="4" r="3" fill="#888"/><path d="M6.5 12.5l4-4 4 4z" fill="#3a8ae0"/></svg>
<div style="left:1378px;top:532.5px;width:268px;height:1px;background:#c3c3c3"></div>
<svg style="position:absolute;left:1385px;top:536.7px" width="7" height="7" viewBox="0 0 7 7"><rect x="1.4" y="1.4" width="4.2" height="4.2" fill="#fff" stroke="#dc3048" stroke-width="1.5"/></svg>
<span class="t" style="left:1402.4px;top:535.28px;font-size:10.5px;font-family:'Liberation Sans',sans-serif;color:#262626;">$currentDomainID</span>
<svg style="position:absolute;left:1385px;top:552.0250000000001px" width="7" height="7" viewBox="0 0 7 7"><rect x="1.4" y="1.4" width="4.2" height="4.2" fill="#fff" stroke="#dc3048" stroke-width="1.5"/></svg>
<span class="t" style="left:1402.4px;top:550.60px;font-size:10.5px;font-family:'Liberation Sans',sans-serif;color:#262626;">$currentURLID</span>
<svg style="position:absolute;left:1384px;top:567.35px" width="8" height="8" viewBox="0 0 8 8"><circle cx="4.0" cy="4.0" r="4.0" fill="#3c9a58"/><circle cx="3.4" cy="3.0" r="1.8" fill="#7cc08e" opacity=".7"/></svg>
<svg style="position:absolute;left:1390px;top:563.85px" width="5" height="6" viewBox="0 0 5 6"><path d="M4.2 1.2A2 2.5 0 1 0 4.2 4.8" fill="none" stroke="#3c9a58" stroke-width="1"/></svg>
<span class="t" style="left:1402.4px;top:565.93px;font-size:10.5px;font-family:'Liberation Sans',sans-serif;color:#262626;">__construct($domainName)</span>
<svg style="position:absolute;left:1384px;top:582.6750000000001px" width="8" height="8" viewBox="0 0 8 8"><circle cx="4.0" cy="4.0" r="4.0" fill="#3c9a58"/><circle cx="3.4" cy="3.0" r="1.8" fill="#7cc08e" opacity=".7"/></svg>
<span class="t" style="left:1402.4px;top:581.25px;font-size:10.5px;font-family:'Liberation Sans',sans-serif;color:#262626;">crawl()</span>
<div style="left:1378px;top:594.9px;width:268px;height:13.8px;background:#dcdcdc"></div>
<svg style="position:absolute;left:1384px;top:598.0px" width="8" height="8" viewBox="0 0 8 8"><circle cx="4.0" cy="4.0" r="4.0" fill="#3c9a58"/><circle cx="3.4" cy="3.0" r="1.8" fill="#7cc08e" opacity=".7"/></svg>
<span class="t" style="left:1402.4px;top:596.58px;font-size:10.5px;font-family:'Liberation Sans',sans-serif;color:#262626;">getListFromDatabase($domainName)</span>
<svg style="position:absolute;left:1384px;top:613.325px" width="8" height="8" viewBox="0 0 8 8"><circle cx="4.0" cy="4.0" r="4.0" fill="#3c9a58"/><circle cx="3.4" cy="3.0" r="1.8" fill="#7cc08e" opacity=".7"/></svg>
<span class="t" style="left:1402.4px;top:611.90px;font-size:10.5px;font-family:'Liberation Sans',sans-serif;color:#262626;">getNextURLToCrawl()</span>
<svg style="position:absolute;left:1384px;top:628.6500000000001px" width="8" height="8" viewBox="0 0 8 8"><circle cx="4.0" cy="4.0" r="4.0" fill="#3c9a58"/><circle cx="3.4" cy="3.0" r="1.8" fill="#7cc08e" opacity=".7"/></svg>
<span class="t" style="left:1402.4px;top:627.23px;font-size:10.5px;font-family:'Liberation Sans',sans-serif;color:#262626;">getOrInsertDomain($domain)</span>
<svg style="position:absolute;left:1384px;top:643.975px" width="8" height="8" viewBox="0 0 8 8"><circle cx="4.0" cy="4.0" r="4.0" fill="#3c9a58"/><circle cx="3.4" cy="3.0" r="1.8" fill="#7cc08e" opacity=".7"/></svg>
<span class="t" style="left:1402.4px;top:642.55px;font-size:10.5px;font-family:'Liberation Sans',sans-serif;color:#262626;">getOrInsertURL($domainID, $path)</span>
<svg style="position:absolute;left:1384px;top:659.3000000000001px" width="8" height="8" viewBox="0 0 8 8"><circle cx="4.0" cy="4.0" r="4.0" fill="#3c9a58"/><circle cx="3.4" cy="3.0" r="1.8" fill="#7cc08e" opacity=".7"/></svg>
<span class="t" style="left:1402.4px;top:657.88px;font-size:10.5px;font-family:'Liberation Sans',sans-serif;color:#262626;">insertLinks($sourceID, $destID)</span>
<svg style="position:absolute;left:1384px;top:674.625px" width="8" height="8" viewBox="0 0 8 8"><circle cx="4.0" cy="4.0" r="4.0" fill="#3c9a58"/><circle cx="3.4" cy="3.0" r="1.8" fill="#7cc08e" opacity=".7"/></svg>
<span class="t" style="left:1402.4px;top:673.20px;font-size:10.5px;font-family:'Liberation Sans',sans-serif;color:#262626;">printSummary()</span>
<svg style="position:absolute;left:1384px;top:689.95px" width="8" height="8" viewBox="0 0 8 8"><circle cx="4.0" cy="4.0" r="4.0" fill="#3c9a58"/><circle cx="3.4" cy="3.0" r="1.8" fill="#7cc08e" opacity=".7"/></svg>
<span class="t" style="left:1402.4px;top:688.53px;font-size:10.5px;font-family:'Liberation Sans',sans-serif;color:#262626;">robotsAllow($url)</span>
<svg style="position:absolute;left:1384px;top:705.2750000000001px" width="8" height="8" viewBox="0 0 8 8"><circle cx="4.0" cy="4.0" r="4.0" fill="#3c9a58"/><circle cx="3.4" cy="3.0" r="1.8" fill="#7cc08e" opacity=".7"/></svg>
<span class="t" style="left:1402.4px;top:703.85px;font-size:10.5px;font-family:'Liberation Sans',sans-serif;color:#262626;">scrapeHyperlinks($url)</span>
<div style="left:496.5px;top:410.5px;width:246.5px;height:173.5px;background:#fff;border-radius:0 0 4px 4px;box-shadow:0 5px 14px rgba(0,0,0,.22),0 0 2px rgba(0,0,0,.2)"></div>
<div style="left:496.5px;top:410.5px;width:246.5px;height:163px;overflow:hidden">
<div style="left:0px;top:1px;width:246.5px;height:14px;background:#d9d9d9"></div>
<svg style="position:absolute;left:7.300000000000011px;top:3.3999999999999773px" width="8.5" height="8.5" viewBox="0 0 8.5 8.5"><circle cx="4.25" cy="4.25" r="4" fill="#9a9a9a"/><circle cx="3.8" cy="3.6" r="2.2" fill="#bdbdbd"/></svg>
<span class="t" style="left:19.600000000000023px;top:2.22px;font-size:10.8px;font-family:'Liberation Sans',sans-serif;color:#262626;">false</span>
<svg style="position:absolute;left:7.300000000000011px;top:18.724999999999966px" width="8.5" height="8.5" viewBox="0 0 8.5 8.5"><circle cx="4.25" cy="4.25" r="4" fill="#9a9a9a"/><circle cx="3.8" cy="3.6" r="2.2" fill="#bdbdbd"/></svg>
<span class="t" style="left:19.600000000000023px;top:17.54px;font-size:10.8px;font-family:'Liberation Sans',sans-serif;color:#262626;">final</span>
<svg style="position:absolute;left:7.300000000000011px;top:34.049999999999955px" width="8.5" height="8.5" viewBox="0 0 8.5 8.5"><circle cx="4.25" cy="4.25" r="4" fill="#9a9a9a"/><circle cx="3.8" cy="3.6" r="2.2" fill="#bdbdbd"/></svg>
<span class="t" style="left:19.600000000000023px;top:32.87px;font-size:10.8px;font-family:'Liberation Sans',sans-serif;color:#262626;">finally</span>
<svg style="position:absolute;left:7.300000000000011px;top:49.375px" width="8.5" height="8.5" viewBox="0 0 8.5 8.5"><circle cx="4.25" cy="4.25" r="4" fill="#9a9a9a"/><circle cx="3.8" cy="3.6" r="2.2" fill="#bdbdbd"/></svg>
<span class="t" style="left:19.600000000000023px;top:48.20px;font-size:10.8px;font-family:'Liberation Sans',sans-serif;color:#262626;">for</span>
<svg style="position:absolute;left:7.300000000000011px;top:64.69999999999999px" width="8.5" height="8.5" viewBox="0 0 8.5 8.5"><circle cx="4.25" cy="4.25" r="4" fill="#9a9a9a"/><circle cx="3.8" cy="3.6" r="2.2" fill="#bdbdbd"/></svg>
<span class="t" style="left:19.600000000000023px;top:63.52px;font-size:10.8px;font-family:'Liberation Sans',sans-serif;color:#262626;">foreach</span>
<svg style="position:absolute;left:7.300000000000011px;top:80.02499999999998px" width="8.5" height="8.5" viewBox="0 0 8.5 8.5"><circle cx="4.25" cy="4.25" r="4" fill="#9a9a9a"/><circle cx="3.8" cy="3.6" r="2.2" fill="#bdbdbd"/></svg>
<span class="t" style="left:19.600000000000023px;top:78.84px;font-size:10.8px;font-family:'Liberation Sans',sans-serif;color:#262626;">function</span>
<svg style="position:absolute;left:7.300000000000011px;top:95.34999999999991px" width="8.5" height="8.5" viewBox="0 0 8.5 8.5"><circle cx="4.25" cy="4.25" r="4" fill="#3a9a58"/><circle cx="3.8" cy="3.6" r="2" fill="#78c090" opacity=".8"/></svg>
<span class="t" style="left:19.600000000000023px;top:94.17px;font-size:10.8px;font-family:'Liberation Sans',sans-serif;color:#262626;">fclose($handle) - standard.php</span>
<svg style="position:absolute;left:7.300000000000011px;top:110.67499999999995px" width="8.5" height="8.5" viewBox="0 0 8.5 8.5"><circle cx="4.25" cy="4.25" r="4" fill="#3a9a58"/><circle cx="3.8" cy="3.6" r="2" fill="#78c090" opacity=".8"/></svg>
<span class="t" style="left:19.600000000000023px;top:109.49px;font-size:10.8px;font-family:'Liberation Sans',sans-serif;color:#262626;">feof($handle) - standard.php</span>
<svg style="position:absolute;left:7.300000000000011px;top:126.0px" width="8.5" height="8.5" viewBox="0 0 8.5 8.5"><circle cx="4.25" cy="4.25" r="4" fill="#3a9a58"/><circle cx="3.8" cy="3.6" r="2" fill="#78c090" opacity=".8"/></svg>
<span class="t" style="left:19.600000000000023px;top:124.82px;font-size:10.8px;font-family:'Liberation Sans',sans-serif;color:#262626;">fflush($handle) - standard.php</span>
<svg style="position:absolute;left:7.300000000000011px;top:141.32499999999993px" width="8.5" height="8.5" viewBox="0 0 8.5 8.5"><circle cx="4.25" cy="4.25" r="4" fill="#3a9a58"/><circle cx="3.8" cy="3.6" r="2" fill="#78c090" opacity=".8"/></svg>
<span class="t" style="left:19.600000000000023px;top:140.14px;font-size:10.8px;font-family:'Liberation Sans',sans-serif;color:#262626;">fgetc($handle) - standard.php</span>
<svg style="position:absolute;left:7.300000000000011px;top:156.64999999999998px" width="8.5" height="8.5" viewBox="0 0 8.5 8.5"><circle cx="4.25" cy="4.25" r="4" fill="#3a9a58"/><circle cx="3.8" cy="3.6" r="2" fill="#78c090" opacity=".8"/></svg>
<span class="t" style="left:19.600000000000023px;top:155.47px;font-size:10.8px;font-family:'Liberation Sans',sans-serif;color:#262626;">fgetcsv($handle, $length, $delimiter, $enclosure</span>
</div>
<div style="left:497px;top:573.5px;width:245.5px;height:1px;background:#dedede"></div>
<span class="t" style="left:567px;top:574.55px;font-size:9px;font-family:'Liberation Sans',sans-serif;color:#4a4a4a;">Press &#x27;^Space&#x27; to show Template Proposals</span>
<div style="left:503.3px;top:870px;width:145.5px;height:24px;background:linear-gradient(#e1e4ec,#f7f8fa 80%,#fff);border-radius:6px 6px 0 0"></div>
<svg style="position:absolute;left:373.5px;top:876px" width="13" height="14" viewBox="0 0 13 14"><rect x=".5" y=".5" width="9" height="13" fill="#eef2f8" stroke="#a8b4c8"/><path d="M9.5 1.5c2 1 3 3 3 6s-1 5-3 6" fill="#dde6f0" stroke="#a8b4c8"/><circle cx="4.5" cy="4.5" r="2.5" fill="#f08a9a"/><circle cx="4.5" cy="10" r="2.5" fill="#f4c060"/></svg>
<span class="t" style="left:391.7px;top:876.68px;font-size:10.5px;font-family:'Liberation Sans',sans-serif;color:#8a8a8a;">Problems</span>
<svg style="position:absolute;left:445.5px;top:876px" width="12" height="13" viewBox="0 0 12 13"><path d="M2 1v11M6 1v11M10 1v11" stroke="#9ab0c8"/><rect x=".5" y="3" width="3" height="2" fill="#5a8ac0"/><rect x="4.5" y="7" width="3" height="2" fill="#5a8ac0"/><rect x="8.5" y="4" width="3" height="2" fill="#5a8ac0"/><path d="M8 10h4v3H8z" fill="#f0c040"/></svg>
<span class="t" style="left:462.4px;top:876.68px;font-size:10.5px;font-family:'Liberation Sans',sans-serif;color:#8a8a8a;">Servers</span>
<svg style="position:absolute;left:507px;top:876.5px" width="12.5" height="12.5" viewBox="0 0 12.5 12.5"><circle cx="6.25" cy="6.25" r="5.8" fill="#3a78c0"/><path d="M2 4c2 0 3 1 3 3s2 2 2 4M7 1.5c0 2 2 2 4 3" fill="none" stroke="#8ac060" stroke-width="2"/><circle cx="4.5" cy="4" r="2" fill="#fff" opacity=".35"/></svg>
<span class="t" style="left:524px;top:876.68px;font-size:10.5px;font-family:'Liberation Sans',sans-serif;color:#1e1e1e;">Internal Web Browser</span>
<svg style="position:absolute;left:631px;top:877.5px" width="10" height="10" viewBox="0 0 10 10"><path d="M2.1 2.1L7.9 7.9M7.9 2.1L2.1 7.9" stroke="#333" stroke-width="3.5" stroke-linecap="round"/><path d="M2.1 2.1L7.9 7.9M7.9 2.1L2.1 7.9" stroke="#fff" stroke-width="1.7" stroke-linecap="round"/></svg>
<svg style="position:absolute;left:653px;top:877px" width="12" height="12" viewBox="0 0 12 12"><rect x=".5" y=".5" width="11" height="8" fill="#eef4fa" stroke="#8aa8c8"/><rect x="2" y="2" width="8" height="5" fill="#cfe0f2"/><path d="M3 11.5h6" stroke="#8aa8c8" stroke-width="1.5"/></svg>
<span class="t" style="left:669.4px;top:876.68px;font-size:10.5px;font-family:'Liberation Sans',sans-serif;color:#8a8a8a;">Console</span>
<svg style="position:absolute;left:967px;top:876.5px" width="9" height="5" viewBox="0 0 9 5"><rect x=".75" y=".75" width="7.5" height="3" rx=".5" fill="#fff" stroke="#2a2a2a" stroke-width="1.4"/><path d="M1.4 1.2h6.2" stroke="#888" stroke-width=".8"/></svg>
<svg style="position:absolute;left:986.0px;top:875.5px" width="10" height="10.5" viewBox="0 0 10 10.5"><rect x=".75" y=".75" width="8.5" height="8.7" rx=".6" fill="#fff" stroke="#333" stroke-width="1.4"/><rect x="1.4" y="1.4" width="7.2" height="1.6" fill="#8a8a8a"/></svg>
<svg style="position:absolute;left:376.8px;top:902px" width="13" height="12" viewBox="0 0 13 12"><path d="M.5 6L6 .8V4h6.5v4H6v3.2z" fill="#f2f2f2" stroke="#dadada" stroke-width=".8" opacity=".8"/></svg>
<svg style="position:absolute;left:397.3px;top:902px" width="13" height="12" viewBox="0 0 13 12"><path d="M12.5 6L7 .8V4H.5v4H7v3.2z" fill="#f2f2f2" stroke="#dadada" stroke-width=".8" opacity=".8"/></svg>
<svg style="position:absolute;left:418.5px;top:902px" width="10.5" height="10.5" viewBox="0 0 10.5 10.5"><rect x=".5" y=".5" width="9.5" height="9.5" fill="#e0202a" stroke="#b01018"/><rect x="2" y="2" width="6.5" height="6.5" fill="none" stroke="#f4a0a0" stroke-width=".6"/></svg>
<svg style="position:absolute;left:436.5px;top:900.5px" width="14" height="14" viewBox="0 0 14 14"><path d="M2.5 7a4.5 4.5 0 0 1 8-3M11.5 7a4.5 4.5 0 0 1-8 3" fill="none" stroke="#d9a020" stroke-width="1.8"/><path d="M9 1.5l2.5 2.5-3 1M5 12.5l-2.5-2.5 3-1" fill="none" stroke="#d9a020" stroke-width="1.5"/></svg>
<div style="left:457.3px;top:899.3px;width:490.5px;height:16px;background:#fff;border:1px solid #b9b9b9;border-radius:3px"></div>
<div style="left:933.5px;top:899.3px;width:14.3px;height:16px;background:linear-gradient(#6aa8f0,#2a78e0);border-radius:0 3px 3px 0"></div>
<svg style="position:absolute;left:937px;top:904.5px" width="7" height="5" viewBox="0 0 7 5"><path d="M.8 .8L3.5 3.8L6.2 .8" fill="none" stroke="#fff" stroke-width="1.3"/></svg>
<svg style="position:absolute;left:958px;top:902.5px" width="13" height="11" viewBox="0 0 13 11"><path d="M1 .5L12.5 5.5L1 10.5z" fill="#3aaa4a" stroke="#2a8a3a" stroke-width=".6"/></svg>
<div style="left:982.8px;top:899.3px;width:18.5px;height:17.7px;background:linear-gradient(#2a58b8,#1a3a98)"></div>
<svg style="position:absolute;left:985px;top:902px" width="14" height="12" viewBox="0 0 14 12"><ellipse cx="7" cy="6" rx="5" ry="5" fill="#6a5ab0"/><path d="M0 6.5h14" stroke="#c8c0f0" stroke-width="1.2"/><circle cx="8" cy="4" r="2" fill="#e8e0ff" opacity=".6"/></svg>
<svg style="position:absolute;left:1016px;top:876px" width="14" height="14" viewBox="0 0 14 14"><rect x="2.5" y="2" width="10" height="11.5" fill="#fbf8f0" stroke="#d8c8a8"/><rect x="5" y=".5" width="5" height="3" fill="#b8c8d8"/><path d="M1 8l3 3 5-6" fill="none" stroke="#4a9ae0" stroke-width="1.8"/><path d="M8 8h3M8 10h3" stroke="#a0b0c0"/></svg>
<span class="t" style="left:1034.5px;top:876.68px;font-size:10.5px;font-family:'Liberation Sans',sans-serif;color:#8a8a8a;">Tasks</span>
<div style="left:1066px;top:870px;width:120px;height:24px;background:linear-gradient(#e1e4ec,#f7f8fa 80%,#fff);border-radius:6px 6px 0 0"></div>
<svg style="position:absolute;left:1069.5px;top:876px" width="14" height="14" viewBox="0 0 14 14"><path d="M1.5 1h3v2h4V1h3v12H1.5z" fill="#f6d060" stroke="#c89a30"/><rect x="3" y="7" width="10" height="6.5" fill="#fff" stroke="#a0a0a0" stroke-width=".6"/><path d="M4.5 8.5v4M7 8.5v4M10 8.5v4" stroke="#c03030" stroke-width="1"/></svg>
<span class="t" style="left:1087.5px;top:876.68px;font-size:10.5px;font-family:'Liberation Sans',sans-serif;color:#1e1e1e;">Git Repositories</span>
<svg style="position:absolute;left:1169px;top:877.5px" width="10" height="10" viewBox="0 0 10 10"><path d="M2.1 2.1L7.9 7.9M7.9 2.1L2.1 7.9" stroke="#333" stroke-width="3.5" stroke-linecap="round"/><path d="M2.1 2.1L7.9 7.9M7.9 2.1L2.1 7.9" stroke="#fff" stroke-width="1.7" stroke-linecap="round"/></svg>
<svg style="position:absolute;left:1427px;top:876px" width="13" height="13" viewBox="0 0 13 13"><rect x=".5" y=".5" width="9" height="9" fill="#fff" stroke="#7890b8"/><rect x="2.5" y="2.5" width="9" height="9" fill="#dde8f5" stroke="#4a70b0"/><path d="M4.5 7h5" stroke="#2a4f90" stroke-width="1.3"/></svg>
<svg style="position:absolute;left:1445px;top:875px" width="14" height="15" viewBox="0 0 14 15"><path d="M1.5 2h3v2h4V2h3v12H1.5z" fill="#f6d060" stroke="#c89a30"/><rect x="2.5" y="8" width="9" height="6" fill="#fff" stroke="#a0a0a0" stroke-width=".6"/><circle cx="11" cy="3" r="2.5" fill="#5aa0e0"/></svg>
<svg style="position:absolute;left:1465px;top:875px" width="14" height="15" viewBox="0 0 14 15"><path d="M1.5 2h3v2h4V2h3v12H1.5z" fill="#f6d060" stroke="#c89a30"/><rect x="2.5" y="8" width="9" height="6" fill="#fff" stroke="#a0a0a0" stroke-width=".6"/><circle cx="11" cy="3" r="2.5" fill="#5aa0e0"/></svg>
<svg style="position:absolute;left:1485px;top:875px" width="14" height="15" viewBox="0 0 14 15"><path d="M1.5 2h3v2h4V2h3v12H1.5z" fill="#f6d060" stroke="#c89a30"/><rect x="2.5" y="8" width="9" height="6" fill="#fff" stroke="#a0a0a0" stroke-width=".6"/><circle cx="11" cy="3" r="2.5" fill="#5aa0e0"/></svg>
<svg style="position:absolute;left:1505px;top:876px" width="14" height="14" viewBox="0 0 14 14"><path d="M2.5 7a4.5 4.5 0 0 1 8-3M11.5 7a4.5 4.5 0 0 1-8 3" fill="none" stroke="#d9a020" stroke-width="1.8"/><path d="M9 1.5l2.5 2.5-3 1M5 12.5l-2.5-2.5 3-1" fill="none" stroke="#d9a020" stroke-width="1.5"/></svg>
<svg style="position:absolute;left:1525px;top:875.5px" width="15" height="14" viewBox="0 0 15 14"><path d="M.8 4.5L5 1v2.2h5v2.6H5V8z" fill="#fde9a8" stroke="#d09020" stroke-width="1"/><path d="M14.2 10L10 6.5v2.2H5v2.6h5v2.2z" fill="#fde9a8" stroke="#d09020" stroke-width="1"/></svg>
<svg style="position:absolute;left:1546px;top:876px" width="12" height="13" viewBox="0 0 12 13"><path d="M2 1v11M2 4h4M2 9h4" stroke="#5a6a7a"/><rect x="6" y="2.5" width="5" height="3" fill="#8aa0c0"/><rect x="6" y="7.5" width="5" height="3" fill="#8aa0c0"/></svg>
<div style="left:1561px;top:873px;width:21px;height:20px;background:#d9d9d9;border:1px solid #c4c4c4"></div>
<svg style="position:absolute;left:1564px;top:876px" width="15" height="14" viewBox="0 0 15 14"><rect x=".5" y=".5" width="10" height="12" fill="#fff" stroke="#8a9bb5"/><path d="M2 3h6M2 6h6M2 9h6" stroke="#4a7ac0"/><path d="M6 13l3-9 3 9" fill="none" stroke="#d9a020" stroke-width="1.6"/></svg>
<svg style="position:absolute;left:1592px;top:877px" width="10" height="6" viewBox="0 0 10 6"><path d="M.8 .8H9.2L5 5.2z" fill="#fff" stroke="#333" stroke-width="1.2"/></svg>
<svg style="position:absolute;left:1609px;top:877.5px" width="9" height="5" viewBox="0 0 9 5"><rect x=".75" y=".75" width="7.5" height="3" rx=".5" fill="#fff" stroke="#2a2a2a" stroke-width="1.4"/><path d="M1.4 1.2h6.2" stroke="#888" stroke-width=".8"/></svg>
<svg style="position:absolute;left:1628.0px;top:876.5px" width="10" height="10.5" viewBox="0 0 10 10.5"><rect x=".75" y=".75" width="8.5" height="8.7" rx=".6" fill="#fff" stroke="#333" stroke-width="1.4"/><rect x="1.4" y="1.4" width="7.2" height="1.6" fill="#8a8a8a"/></svg>
<div style="left:1013.6px;top:895.3px;width:634.5px;height:14px;background:#dcdcdc"></div>
<svg style="position:absolute;left:1021.5px;top:898.5px" width="8" height="7" viewBox="0 0 8 7"><path d="M0 0H8L4 7z" fill="#8c8c8c"/></svg>
<svg style="position:absolute;left:1035px;top:896px" width="9" height="13" viewBox="0 0 9 13"><rect x=".5" y="1" width="8" height="11.5" rx="2" fill="#f8c838" stroke="#c89020"/><path d="M3 4h3M3 7h3M3 10h3" stroke="#e0a020" stroke-width=".8"/></svg>
<span class="t" style="left:1047.4px;top:896.82px;font-size:10.8px;font-family:'Liberation Sans',sans-serif;color:#262626;">git [NO-HEAD - Bare] - /Users/rhoar/git</span>
<svg style="position:absolute;left:1037px;top:913.5px" width="7" height="8" viewBox="0 0 7 8"><path d="M0 0L7 4L0 8z" fill="#8c8c8c"/></svg>
<svg style="position:absolute;left:1045.5px;top:911px" width="14" height="13" viewBox="0 0 14 13"><path d="M7 1v5M3 6h8M3 6v6M7 6v6M11 6v6" stroke="#6a90c0" stroke-width="1.2" fill="none"/><circle cx="3" cy="11" r="2" fill="#cfe0f0" stroke="#6a90c0" stroke-width=".8"/><circle cx="7" cy="11" r="2" fill="#cfe0f0" stroke="#6a90c0" stroke-width=".8"/><circle cx="11" cy="11" r="2" fill="#cfe0f0" stroke="#6a90c0" stroke-width=".8"/></svg>
<span class="t" style="left:1062.3px;top:913.16px;font-size:10.4px;font-family:'Liberation Sans',sans-serif;color:#262626;">Branches</span>
<svg style="position:absolute;left:1046px;top:926px" width="14" height="13" viewBox="0 0 14 13"><path d="M1 1v10h3" stroke="#6a90c0" fill="none"/><rect x="3.5" y="3" width="10" height="9.5" fill="#e8f0f8" stroke="#6a90c0"/><path d="M5.5 6.5h6M5.5 9h6" stroke="#3a5a8a"/></svg>
<span class="t" style="left:1062.3px;top:928.46px;font-size:10.4px;font-family:'Liberation Sans',sans-serif;color:#262626;">Tags</span>
<svg style="position:absolute;left:1046px;top:942px" width="15" height="11" viewBox="0 0 15 11"><path d="M.5 1.5h4l1 1.5h6v7.5H.5z" fill="#f6d88a" stroke="#c8963a"/><path d="M2 4.5h12.5l-2 6H.5z" fill="#fde6a8" stroke="#c8963a"/></svg>
<span class="t" style="left:1062.3px;top:943.76px;font-size:10.4px;font-family:'Liberation Sans',sans-serif;color:#262626;">References</span>
<svg style="position:absolute;left:1048px;top:957px" width="9" height="13" viewBox="0 0 9 13"><rect x=".5" y="1" width="8" height="11.5" rx="2" fill="#f8c838" stroke="#c89020"/><path d="M3 4h3M3 7h3M3 10h3" stroke="#e0a020" stroke-width=".8"/></svg>
<span class="t" style="left:1062.3px;top:959.06px;font-size:10.4px;font-family:'Liberation Sans',sans-serif;color:#262626;">Remotes</span>
<div style="left:1127.5px;top:1009.5px;width:1px;height:19.5px;background:#b4b4b4"></div>
<div style="left:1221px;top:1009.5px;width:1px;height:19.5px;background:#b4b4b4"></div>
<div style="left:1309.4px;top:1009.5px;width:1px;height:19.5px;background:#b4b4b4"></div>
<span class="t" style="left:1134.6px;top:1014.28px;font-size:10.5px;font-family:'Liberation Sans',sans-serif;color:#262626;">Writable</span>
<span class="t" style="left:1227.7px;top:1014.28px;font-size:10.5px;font-family:'Liberation Sans',sans-serif;color:#262626;">Smart Insert</span>
<span class="t" style="left:1316.5px;top:1014.28px;font-size:10.5px;font-family:'Liberation Sans',sans-serif;color:#262626;">29 : 14</span>
<svg style="position:absolute;left:1395px;top:1012px" width="2" height="17" viewBox="0 0 2 17"><path d="M1 1v15" stroke="#9a9a9a" stroke-dasharray="1.5 2.5"/></svg>
<svg style="position:absolute;left:3px;top:47px" width="2" height="20" viewBox="0 0 2 20"><path d="M1 1v18" stroke="#d0b890" stroke-width="1.3" stroke-dasharray="1.2 3"/></svg>
<svg style="position:absolute;left:9.5px;top:49.5px" width="14" height="14" viewBox="0 0 14 14"><rect x=".5" y="2.5" width="10" height="10.5" fill="#f8fbff" stroke="#b89a60"/><rect x="1" y="3" width="9" height="2.5" fill="#3a80d0"/><path d="M11 .5l1 2 2 .5-2 1-1 2-1-2-2-1 2-.5z" fill="#f8e090" stroke="#c89a30" stroke-width=".7"/></svg>
<svg style="position:absolute;left:26.6px;top:55.3px" width="5" height="4" viewBox="0 0 5 4"><path d="M0 0h5L2.5 4z" fill="#111"/></svg>
<svg style="position:absolute;left:37px;top:50.5px" width="14" height="13.5" viewBox="0 0 14 13.5"><path d="M.5 .5h11l2 2v10.5H.5z" fill="#c8daf0" stroke="#6a8ac0"/><rect x="3" y="1" width="7.5" height="5" fill="#f0f6ff" stroke="#8aa0c8" stroke-width=".6"/><rect x="3.5" y="8.5" width="6.5" height="4.5" fill="#8aaad8"/><rect x="5" y="9.5" width="2" height="2.5" fill="#f0f6ff"/></svg>
<svg style="position:absolute;left:57px;top:50px" width="14" height="14" viewBox="0 0 14 14"><path d="M.5 .5h8l2 2v8H.5z" fill="#dfe6ee" stroke="#9aaabb"/><path d="M3.5 3.5h8l2 2v8h-10z" fill="#cfdcec" stroke="#8a9ab8"/><rect x="6" y="9.5" width="5" height="3.5" fill="#8aaad8"/></svg>
<svg style="position:absolute;left:75px;top:47px" width="2" height="20" viewBox="0 0 2 20"><path d="M1 1v18" stroke="#d0b890" stroke-width="1.3" stroke-dasharray="1.2 3"/></svg>
<svg style="position:absolute;left:82px;top:50.5px" width="12" height="13" viewBox="0 0 12 13"><circle cx="6" cy="6.5" r="3.5" fill="#6ab0f0" stroke="#2a60b0" stroke-width="1.3"/><path d="M.5 .5L11.5 12.5" stroke="#2a4aa0" stroke-width="1.1"/></svg>
<svg style="position:absolute;left:99.5px;top:47px" width="2" height="20" viewBox="0 0 2 20"><path d="M1 1v18" stroke="#d0b890" stroke-width="1.3" stroke-dasharray="1.2 3"/></svg>
<svg style="position:absolute;left:105.5px;top:49.5px" width="14" height="15" viewBox="0 0 14 15"><ellipse cx="7" cy="8" rx="3.8" ry="4.3" fill="#5ab05a" stroke="#2a7a3a" stroke-width=".8"/><path d="M1 3l3 3M13 3l-3 3M.5 8.5h3M10.5 8.5h3M1.5 14l2.5-2.5M12.5 14L10 11.5M7 1v3" stroke="#2a6a3a" stroke-width="1.1"/><circle cx="6" cy="7" r="1.5" fill="#b8e0a8"/></svg>
<svg style="position:absolute;left:122px;top:55.3px" width="5" height="4" viewBox="0 0 5 4"><path d="M0 0h5L2.5 4z" fill="#111"/></svg>
<svg style="position:absolute;left:132px;top:50px" width="13.5" height="13.5" viewBox="0 0 13.5 13.5"><circle cx="6.75" cy="6.75" r="6.4" fill="#2a9a3a" stroke="#1a7a2a" stroke-width=".6"/><circle cx="6.75" cy="5.5" r="4.5" fill="#5ac05a" opacity=".5"/><path d="M5 3.5v6.5l5-3.25z" fill="#fff"/></svg>
<svg style="position:absolute;left:148.6px;top:55.3px" width="5" height="4" viewBox="0 0 5 4"><path d="M0 0h5L2.5 4z" fill="#111"/></svg>
<svg style="position:absolute;left:158px;top:49px" width="15.5" height="14" viewBox="0 0 15.5 14"><circle cx="5.25" cy="5.25" r="5" fill="#2a9a3a"/><path d="M4 2.5v5.5l4-2.75z" fill="#fff"/><rect x="7.5" y="9" width="8" height="5" fill="#e02020" stroke="#a01010" stroke-width=".6"/><path d="M9.5 9V7.5h4V9" fill="none" stroke="#a01010"/><path d="M7.5 11h8" stroke="#fff" stroke-width=".6"/></svg>
<svg style="position:absolute;left:175.8px;top:55.3px" width="5" height="4" viewBox="0 0 5 4"><path d="M0 0h5L2.5 4z" fill="#111"/></svg>
<svg style="position:absolute;left:185px;top:47px" width="2" height="20" viewBox="0 0 2 20"><path d="M1 1v18" stroke="#d0b890" stroke-width="1.3" stroke-dasharray="1.2 3"/></svg>
<svg style="position:absolute;left:189.5px;top:50.5px" width="15" height="12" viewBox="0 0 15 12"><path d="M.5 2.5h4l1 1.5h6v7.5H.5z" fill="#f6d88a" stroke="#c8963a"/><rect x="4" y=".5" width="8" height="5" fill="#f8fbff" stroke="#8aa0c8" stroke-width=".7"/><path d="M2.5 5h12l-2.5 6.5H.5z" fill="#fde6a8" stroke="#c8963a"/></svg>
<svg style="position:absolute;left:209.5px;top:50px" width="16" height="14" viewBox="0 0 16 14"><path d="M2 13l2-4 7-8 4 3-7 8z" fill="#f8d070" stroke="#c89a30" stroke-width=".8"/><path d="M2 13l2-4 3 2z" fill="#fff8e0" stroke="#a08040" stroke-width=".6"/><path d="M6 8l3 2.5" stroke="#8a80a0" stroke-width="1.5"/></svg>
<svg style="position:absolute;left:227px;top:55.3px" width="5" height="4" viewBox="0 0 5 4"><path d="M0 0h5L2.5 4z" fill="#111"/></svg>
<svg style="position:absolute;left:236.5px;top:47px" width="2" height="20" viewBox="0 0 2 20"><path d="M1 1v18" stroke="#d0b890" stroke-width="1.3" stroke-dasharray="1.2 3"/></svg>
<div style="left:238.9px;top:46.3px;width:20px;height:19.7px;background:#a9a9a9;border:1px solid #9a9a9a"></div>
<svg style="position:absolute;left:241px;top:49px" width="16" height="15" viewBox="0 0 16 15"><path d="M14.5 .5L8 8" stroke="#c8b070" stroke-width="1.4"/><path d="M1.5 13.5c1-3 3-6 6-6.5l2.5 2c-.5 3-4 4.5-8.5 4.5z" fill="#f0d040" stroke="#c8a020" stroke-width=".7"/></svg>
<svg style="position:absolute;left:261px;top:47px" width="2" height="20" viewBox="0 0 2 20"><path d="M1 1v18" stroke="#d0b890" stroke-width="1.3" stroke-dasharray="1.2 3"/></svg>
<svg style="position:absolute;left:265.5px;top:49.5px" width="14" height="15" viewBox="0 0 14 15"><rect x="4.5" y="5.5" width="9" height="9" fill="#f0f4fa" stroke="#9ab0c8"/><path d="M6.5 8.5h5M6.5 10.5h5" stroke="#6a8ac0"/><rect x="6" y="12" width="4" height="1.5" fill="#2a5ab0"/><path d="M3 .5v6H.5L4.5 10l4-3.5H6V.5z" fill="#f8d070" stroke="#d09a20" stroke-width=".9"/></svg>
<svg style="position:absolute;left:282.8px;top:55.3px" width="5" height="4" viewBox="0 0 5 4"><path d="M0 0h5L2.5 4z" fill="#111"/></svg>
<svg style="position:absolute;left:292.5px;top:49.5px" width="14" height="15" viewBox="0 0 14 15"><rect x="4.5" y=".5" width="9" height="9" fill="#f0f4fa" stroke="#9ab0c8"/><path d="M6.5 3.5h5M6.5 5.5h5" stroke="#6a8ac0"/><rect x="6" y="2" width="4" height="1.5" fill="#2a5ab0"/><path d="M3 14.5v-6H.5L4.5 5l4 3.5H6v6z" fill="#f8d070" stroke="#d09a20" stroke-width=".9"/></svg>
<svg style="position:absolute;left:309.6px;top:55.3px" width="5" height="4" viewBox="0 0 5 4"><path d="M0 0h5L2.5 4z" fill="#111"/></svg>
<svg style="position:absolute;left:318.5px;top:50px" width="16" height="12" viewBox="0 0 16 12"><path d="M15 4.5H9V1.5L3.5 6.5 9 11.5V8.5h6z" fill="#f8d070" stroke="#d09a20" stroke-width=".9"/><path d="M3 .5v4M1 2.5h4M1.5 1l3 3M4.5 1l-3 3" stroke="#3a8ad0" stroke-width=".8"/></svg>
<svg style="position:absolute;left:340px;top:50.5px" width="13.5" height="11" viewBox="0 0 13.5 11"><path d="M13 3.5H7V.7L1 5.5l6 4.8V7.5h6z" fill="#f8d070" stroke="#d09a20" stroke-width=".9"/></svg>
<svg style="position:absolute;left:356.7px;top:55.3px" width="5" height="4" viewBox="0 0 5 4"><path d="M0 0h5L2.5 4z" fill="#111"/></svg>
<svg style="position:absolute;left:367.5px;top:51px" width="12" height="10" viewBox="0 0 12 10"><path d="M.5 3.5h5V.7l6 4.3-6 4.3V6.5h-5z" fill="#e4e4e4" stroke="#cfcfcf" stroke-width=".8"/></svg>
<svg style="position:absolute;left:383.6px;top:55.3px" width="5" height="4" viewBox="0 0 5 4"><path d="M0 0h5L2.5 4z" fill="#8a8a8a"/></svg>
<svg style="position:absolute;left:392.5px;top:47px" width="2" height="20" viewBox="0 0 2 20"><path d="M1 1v18" stroke="#d0b890" stroke-width="1.3" stroke-dasharray="1.2 3"/></svg>
<div style="left:397px;top:44px;width:1.2px;height:26px;background:#5a6470"></div>
<svg style="position:absolute;left:405.5px;top:49.5px" width="14" height="13" viewBox="0 0 14 13"><rect x=".5" y="3.5" width="9.5" height="9" fill="#fff" stroke="#9a8a6a"/><path d="M.5 7.5h9.5M4.5 3.5v9" stroke="#9a8a6a"/><rect x="1" y="4" width="3.5" height="3.5" fill="#8ab0e0"/><path d="M11 .5l1 2 2 .5-2 1-1 2-1-2-2-1 2-.5z" fill="#f8e090" stroke="#c89a30" stroke-width=".7"/></svg>
<div style="left:424.5px;top:47px;width:1px;height:20px;background:#d8d8d8"></div>
<div style="left:428.3px;top:47.2px;width:43.3px;height:19.5px;background:#d6d6d6;border:1px solid #b8b8b8"></div>
<svg style="position:absolute;left:430.5px;top:49px" width="16" height="16" viewBox="0 0 16 16"><rect x="3" y=".5" width="12" height="10" fill="#eef4fb" stroke="#5a7ab0"/><rect x="3.5" y="1" width="11" height="2" fill="#3a70c0"/><ellipse cx="6.5" cy="11" rx="5.8" ry="4" fill="#7a50b8" stroke="#5a3090" stroke-width=".6"/><path d="M4.5 11h4" stroke="#fff" stroke-width="1"/></svg>
<span class="t" style="left:447px;top:51.98px;font-size:10.5px;font-family:'Liberation Sans',sans-serif;color:#505050;">PHP</span>
<svg style="position:absolute;left:475.5px;top:49px" width="15" height="15" viewBox="0 0 15 15"><circle cx="6.5" cy="8.5" r="6" fill="#3a80c0"/><path d="M2 7c2 0 3 2 5 2s1 4 3 4" fill="none" stroke="#7ac060" stroke-width="2"/><path d="M14.5 .5L7 9" stroke="#c89a30" stroke-width="1.8"/></svg>
<span class="t" style="left:491.6px;top:51.98px;font-size:10.5px;font-family:'Liberation Sans',sans-serif;color:#505050;">Web</span>
<svg style="position:absolute;left:519.5px;top:49px" width="15" height="15" viewBox="0 0 15 15"><rect x=".5" y=".5" width="8" height="12" fill="#f8d060" stroke="#c8a030"/><rect x="3" y="7.5" width="11.5" height="7" fill="#fff" stroke="#999" stroke-width=".7"/><text x="4" y="13.5" font-size="5.5" font-family="Liberation Sans" font-weight="bold" fill="#c02020">GIT</text></svg>
<span class="t" style="left:536.6px;top:51.98px;font-size:10.5px;font-family:'Liberation Sans',sans-serif;color:#505050;">Git</span>
</body></html>
